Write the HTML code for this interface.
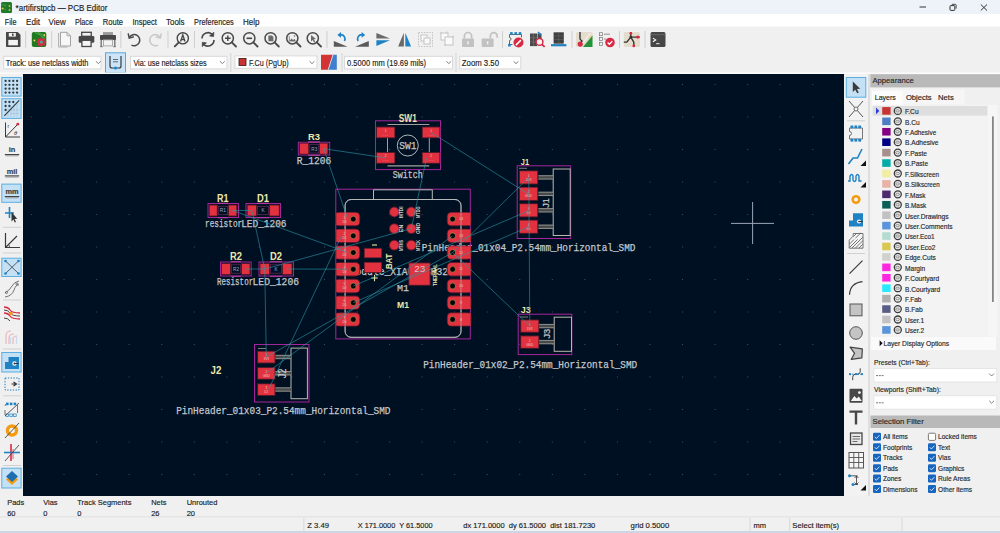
<!DOCTYPE html><html><head><meta charset="utf-8"><title>PCB Editor</title><style>
html,body{margin:0;padding:0;width:1000px;height:533px;overflow:hidden;background:#f0f0f0;}
svg{display:block;font-family:"Liberation Sans", sans-serif;}
</style></head><body>
<svg width="1000" height="533" viewBox="0 0 1000 533">
<rect x="0" y="0" width="1000" height="14" fill="#edf3f8"/>
<rect x="0" y="14" width="1000" height="12.7" fill="#ffffff"/>
<rect x="0" y="26.7" width="1000" height="47.3" fill="#f0f0f0"/>
<rect x="0" y="74" width="23" height="422" fill="#f0f0f0"/>
<rect x="23" y="74" width="821" height="422" fill="#001023"/>
<rect x="844" y="74" width="25" height="422" fill="#f2f2f2"/>
<rect x="868" y="74" width="2" height="422" fill="#dedede"/>
<rect x="870" y="74" width="130" height="422" fill="#f0f0f0"/>
<rect x="0" y="496" width="1000" height="21" fill="#f0f0f0"/>
<rect x="0" y="516.5" width="1000" height="1" fill="#dadada"/>
<rect x="0" y="517.5" width="1000" height="15.5" fill="#f0f0f0"/>
<rect x="0" y="531" width="1000" height="2" fill="#cdd6e6"/>
<rect x="1" y="2" width="11" height="11" rx="1.5" fill="#1f7a2a"/>
<path d="M1 5 q3 -1 5 1 M1 9 q3 -1 5 1" fill="none" stroke="#5fb35f" stroke-width="0.6"/>
<circle cx="2.6" cy="8.4" r="0.9" fill="#e8d24a"/><circle cx="9.5" cy="6" r="0.9" fill="#e8b04a"/><circle cx="9.5" cy="10" r="0.9" fill="#e8b04a"/>
<text x="15.60" y="10.90" font-size="8.7" fill="#1a1a1a" textLength="91.69" lengthAdjust="spacingAndGlyphs" stroke="#1a1a1a" stroke-width="0.15">*artifirstpcb — PCB Editor</text>
<line x1="919.50" y1="7.00" x2="926.00" y2="7.00" stroke="#333" stroke-width="1"/>
<rect x="950" y="5.6" width="4.8" height="4.8" rx="0.8" fill="none" stroke="#333" stroke-width="1"/>
<path d="M951.8 4.3 h3.3 a1 1 0 0 1 1 1 v3.3" fill="none" stroke="#333" stroke-width="0.9"/>
<path d="M980.8 4.5 L987 10.5 M987 4.5 L980.8 10.5" stroke="#333" stroke-width="1"/>
<text x="4.80" y="24.50" font-size="8.55" fill="#1b1b1b" textLength="11.71" lengthAdjust="spacingAndGlyphs" stroke="#1b1b1b" stroke-width="0.15">File</text>
<text x="26.00" y="24.50" font-size="8.55" fill="#1b1b1b" textLength="13.99" lengthAdjust="spacingAndGlyphs" stroke="#1b1b1b" stroke-width="0.15">Edit</text>
<text x="48.60" y="24.50" font-size="8.55" fill="#1b1b1b" textLength="17.10" lengthAdjust="spacingAndGlyphs" stroke="#1b1b1b" stroke-width="0.15">View</text>
<text x="74.90" y="24.50" font-size="8.55" fill="#1b1b1b" textLength="18.11" lengthAdjust="spacingAndGlyphs" stroke="#1b1b1b" stroke-width="0.15">Place</text>
<text x="102.70" y="24.50" font-size="8.55" fill="#1b1b1b" textLength="20.29" lengthAdjust="spacingAndGlyphs" stroke="#1b1b1b" stroke-width="0.15">Route</text>
<text x="132.40" y="24.50" font-size="8.55" fill="#1b1b1b" textLength="24.39" lengthAdjust="spacingAndGlyphs" stroke="#1b1b1b" stroke-width="0.15">Inspect</text>
<text x="166.00" y="24.50" font-size="8.55" fill="#1b1b1b" textLength="18.60" lengthAdjust="spacingAndGlyphs" stroke="#1b1b1b" stroke-width="0.15">Tools</text>
<text x="194.00" y="24.50" font-size="8.55" fill="#1b1b1b" textLength="39.81" lengthAdjust="spacingAndGlyphs" stroke="#1b1b1b" stroke-width="0.15">Preferences</text>
<text x="243.00" y="24.50" font-size="8.55" fill="#1b1b1b" textLength="16.51" lengthAdjust="spacingAndGlyphs" stroke="#1b1b1b" stroke-width="0.15">Help</text>
<g transform="translate(5.50,31.50)"><path d="M0.5 1.2 a0.7 0.7 0 0 1 0.7 -0.7 h11 l2.8 2.8 v11.5 a0.7 0.7 0 0 1 -0.7 0.7 h-13.1 a0.7 0.7 0 0 1 -0.7 -0.7z" fill="#474747"/><rect x="3.3" y="1.5" width="7" height="3.6" fill="#f4f4f4"/><rect x="6.5" y="2" width="1.6" height="2.4" fill="#474747"/><rect x="2.8" y="8.4" width="9.6" height="5.4" fill="#f4f4f4"/></g>
<line x1="25.7" y1="31" x2="25.7" y2="47.8" stroke="#cfcfcf" stroke-width="1"/>
<g transform="translate(31.80,31.50)"><rect x="0" y="0.6" width="14.5" height="14.8" rx="2" fill="#217a22"/><path d="M3 0.8 q6 2 10 7 M6 0.8 q4 1.5 7.5 5" fill="none" stroke="#59b859" stroke-width="0.9"/><circle cx="2.6" cy="9" r="1" fill="#f0d060"/><circle cx="12.5" cy="3.5" r="0.9" fill="#f0d060"/><circle cx="9.5" cy="10.6" r="3.6" fill="#d72b45"/><circle cx="9.5" cy="10.6" r="1.5" fill="#3bb0a0"/><path d="M9.5 5.8 v2 M9.5 13.4 v2 M4.7 10.6 h2 M12.3 10.6 h2 M6.1 7.2 l1.4 1.4 M11.5 12.6 l1.4 1.4 M6.1 14 l1.4 -1.4 M11.5 8.6 l1.4 -1.4" stroke="#d72b45" stroke-width="1.4"/></g>
<line x1="51.7" y1="31" x2="51.7" y2="47.8" stroke="#cfcfcf" stroke-width="1"/>
<g transform="translate(58.00,31.50)"><path d="M2.5 0.8 h6.5 l3.5 3.5 v10.2 h-10z" fill="#f7f7f7" stroke="#9a9a9a" stroke-width="0.9"/><path d="M0.6 1.5 v14 h9" fill="none" stroke="#a8a8a8" stroke-width="0.9"/><path d="M9 0.8 v3.5 h3.5" fill="none" stroke="#9a9a9a" stroke-width="0.8"/></g>
<g transform="translate(78.70,31.50)"><rect x="3" y="0.8" width="9.6" height="4" fill="none" stroke="#474747" stroke-width="1.3"/><rect x="0" y="4.6" width="15.6" height="6.6" rx="1.2" fill="#474747"/><rect x="3.2" y="8.8" width="9.2" height="6.2" fill="#f4f4f4" stroke="#474747" stroke-width="1.3"/></g>
<g transform="translate(100.00,31.50)"><rect x="3" y="0.6" width="10" height="3.2" fill="#9a9a9a"/><rect x="0" y="3.4" width="16" height="5.2" rx="0.8" fill="#474747"/><rect x="3.5" y="8.4" width="9" height="6" fill="#f4f4f4" stroke="#9a9a9a" stroke-width="0.8"/><path d="M1.2 8.6 v6.6 M14.8 8.6 v6.6" stroke="#777" stroke-width="1.4"/><path d="M0 15.2 h3 M13 15.2 h3" stroke="#777" stroke-width="0.9"/></g>
<line x1="120.8" y1="31" x2="120.8" y2="47.8" stroke="#cfcfcf" stroke-width="1"/>
<g transform="translate(127.00,31.50)"><path d="M2.5 5.6 A5.6 5.6 0 1 1 4.5 13.6" fill="none" stroke="#474747" stroke-width="1.5"/><path d="M1.2 1.8 L2.2 6.6 L6.8 5.2" fill="none" stroke="#474747" stroke-width="1.5"/></g>
<g transform="translate(149.50,31.50)"><path d="M10.5 5.6 A5.6 5.6 0 1 0 8.5 13.6" fill="none" stroke="#c8c8c8" stroke-width="1.5"/><path d="M11.8 1.8 L10.8 6.6 L6.2 5.2" fill="none" stroke="#c8c8c8" stroke-width="1.5"/></g>
<line x1="168" y1="31" x2="168" y2="47.8" stroke="#cfcfcf" stroke-width="1"/>
<g transform="translate(174.00,31.50)"><circle cx="8.8" cy="6.8" r="5.6" fill="none" stroke="#474747" stroke-width="1.4"/><path d="M4.8 10.8 L0.8 14.8" stroke="#474747" stroke-width="1.9" stroke-linecap="round"/><path d="M6.6 10 L8.8 3.4 L11 10 M7.4 8 h2.8" fill="none" stroke="#474747" stroke-width="1.3"/></g>
<line x1="194.5" y1="31" x2="194.5" y2="47.8" stroke="#cfcfcf" stroke-width="1"/>
<g transform="translate(200.00,31.50)"><path d="M2 7 A6 6 0 0 1 12.6 3.4" fill="none" stroke="#474747" stroke-width="1.6"/><path d="M14 8.6 A6 6 0 0 1 3.4 12.4" fill="none" stroke="#474747" stroke-width="1.6"/><path d="M13.8 0.8 L13.6 5 L9.6 4.4 z" fill="#474747" stroke="#474747" stroke-width="0.8"/><path d="M2.2 15 L2.4 10.8 L6.4 11.4 z" fill="#474747" stroke="#474747" stroke-width="0.8"/></g>
<g transform="translate(221.00,31.50)"><circle cx="6.8" cy="6.8" r="5.6" fill="none" stroke="#4a4a4a" stroke-width="1.5"/><path d="M10.8 10.8 L15 15" stroke="#4a4a4a" stroke-width="1.9" stroke-linecap="round"/><path d="M4 6.8 h5.6 M6.8 4 v5.6" stroke="#474747" stroke-width="1.5"/></g>
<g transform="translate(242.50,31.50)"><circle cx="6.8" cy="6.8" r="5.6" fill="none" stroke="#4a4a4a" stroke-width="1.5"/><path d="M10.8 10.8 L15 15" stroke="#4a4a4a" stroke-width="1.9" stroke-linecap="round"/><path d="M4 6.8 h5.6" stroke="#474747" stroke-width="1.6"/></g>
<g transform="translate(263.80,31.50)"><circle cx="6.8" cy="6.8" r="5.6" fill="none" stroke="#4a4a4a" stroke-width="1.5"/><path d="M10.8 10.8 L15 15" stroke="#4a4a4a" stroke-width="1.9" stroke-linecap="round"/><path d="M4.6 4 h3.6 l1.4 1.4 v4.4 h-5z" fill="#6a6a6a"/></g>
<g transform="translate(285.50,31.50)"><circle cx="6.8" cy="6.8" r="5.6" fill="none" stroke="#4a4a4a" stroke-width="1.5"/><path d="M10.8 10.8 L15 15" stroke="#4a4a4a" stroke-width="1.9" stroke-linecap="round"/><path d="M4 9.5 l2 -2.6 l1.5 1.6 l1.5 -1.2 l1 2.2z" fill="#6a6a6a"/><path d="M3.8 4.6 v5 h6.2" fill="none" stroke="#6a6a6a" stroke-width="0.7"/><circle cx="9" cy="4.5" r="0.8" fill="#6a6a6a"/></g>
<g transform="translate(306.00,31.50)"><circle cx="6.8" cy="6.8" r="5.6" fill="none" stroke="#4a4a4a" stroke-width="1.5"/><path d="M10.8 10.8 L15 15" stroke="#4a4a4a" stroke-width="1.9" stroke-linecap="round"/><path d="M5 3.4 L5 10 L6.6 8.4 L8.2 11 L9.3 10.3 L7.8 7.8 L10 7.6z" fill="#6a6a6a"/></g>
<line x1="327" y1="31" x2="327" y2="47.8" stroke="#cfcfcf" stroke-width="1"/>
<g transform="translate(333.80,31.50)"><path d="M0 15.2 L13.8 15.2 L0 9.6z" fill="#5a5a5a"/><path d="M10.6 9.5 A4.2 4.2 0 0 0 6.4 3.2" fill="none" stroke="#1f82c4" stroke-width="1.6"/><path d="M3.6 3.4 L7.2 0.6 L7.2 6.2z" fill="#1f82c4"/></g>
<g transform="translate(355.00,31.50)"><path d="M0 15.2 L13.8 15.2 L13.8 9.6z" fill="#5a5a5a"/><path d="M3.2 9.5 A4.2 4.2 0 0 1 7.4 3.2" fill="none" stroke="#1f82c4" stroke-width="1.6"/><path d="M10.2 3.4 L6.6 0.6 L6.6 6.2z" fill="#1f82c4"/></g>
<g transform="translate(375.80,31.50)"><path d="M0.6 1.6 L14.2 7 L0.6 7z" fill="#6a6a6a"/><path d="M0.6 8.8 L14.2 8.8 L0.6 14.4z" fill="#1f82c4"/></g>
<g transform="translate(397.50,31.50)"><path d="M6.4 1.2 L6.4 15 L0.6 15z" fill="#6a6a6a"/><path d="M7.8 1.2 L13.6 15 L7.8 15z" fill="#1f82c4"/></g>
<g transform="translate(417.50,31.50)"><rect x="1" y="1" width="14" height="14" fill="none" stroke="#c4c4c4" stroke-width="1" stroke-dasharray="1.5 1.2"/><rect x="3.5" y="3.5" width="6" height="6" fill="#fafafa" stroke="#c4c4c4" stroke-width="1"/><rect x="6.5" y="6.5" width="6" height="6" fill="#fafafa" stroke="#c4c4c4" stroke-width="1"/></g>
<g transform="translate(440.00,31.50)"><rect x="1" y="1.5" width="7" height="7" fill="#fafafa" stroke="#c4c4c4" stroke-width="1"/><rect x="5" y="5.5" width="8" height="8" fill="#fafafa" stroke="#c4c4c4" stroke-width="1"/><path d="M0 1.5 h2 M7 0 v2 M12 5 h2 M4 13.5 h2" stroke="#c4c4c4" stroke-width="1"/></g>
<g transform="translate(461.00,31.50)"><path d="M3.4 7 V4.6 A3.6 3.6 0 0 1 10.6 4.6 V7" fill="none" stroke="#c2c2c2" stroke-width="1.7"/><rect x="1" y="7" width="12" height="8.6" rx="1" fill="#c2c2c2"/><rect x="6.3" y="9.8" width="1.5" height="3" fill="#f2f2f2"/></g>
<g transform="translate(481.00,31.50)"><path d="M9.4 7 V4.6 A3.4 3.4 0 0 1 16.2 4.6 V6.2" fill="none" stroke="#c2c2c2" stroke-width="1.7"/><rect x="0.6" y="7" width="12" height="8.6" rx="1" fill="#c2c2c2"/><rect x="5.9" y="9.8" width="1.5" height="3" fill="#f2f2f2"/></g>
<line x1="502.5" y1="31" x2="502.5" y2="47.8" stroke="#cfcfcf" stroke-width="1"/>
<g transform="translate(507.50,31.50)"><path d="M2 3 v3 a1.4 1.4 0 0 1 0 3 v4 h3 M2 3 h12 v3" fill="none" stroke="#555" stroke-width="0.9"/><rect x="2.6" y="0.6" width="2.6" height="2.6" fill="#1f82c4"/><rect x="6.9" y="0.6" width="2.6" height="2.6" fill="#1f82c4"/><rect x="11.2" y="0.6" width="2.6" height="2.6" fill="#1f82c4"/><rect x="0.6" y="12.4" width="2.6" height="2.6" fill="#1f82c4"/><circle cx="11" cy="11" r="5" fill="#d72b45"/><path d="M8.4 13.6 L13.4 8.6" stroke="#fff" stroke-width="1.5"/></g>
<g transform="translate(529.50,31.50)"><rect x="0.5" y="2" width="7" height="12.6" fill="#4a4a4a"/><path d="M4 2 v12.6 M0.5 6.2 h7 M0.5 10.4 h7" stroke="#777" stroke-width="0.6"/><rect x="8" y="2" width="4" height="6" fill="#4a4a4a"/><path d="M8.5 0.5 l3 3" stroke="#1f82c4" stroke-width="1.6"/><circle cx="10" cy="10.4" r="3.4" fill="#f4f4f4" stroke="#d72b45" stroke-width="1.5"/><path d="M12.4 12.8 L15.2 15.4" stroke="#d72b45" stroke-width="1.8"/></g>
<g transform="translate(551.00,31.50)"><rect x="2.6" y="0.8" width="10.2" height="11" fill="#3f3f3f"/><path d="M2.6 4.4 h10.2 M2.6 8 h10.2 M7.7 0.8 v11" stroke="#6a6a6a" stroke-width="0.5"/><rect x="0" y="12.6" width="15.4" height="2.2" fill="#1f82c4"/><rect x="3" y="11.4" width="9.4" height="1.2" fill="#777"/></g>
<line x1="572" y1="31" x2="572" y2="47.8" stroke="#cfcfcf" stroke-width="1"/>
<g transform="translate(576.00,31.50)"><rect x="0" y="0.6" width="16.5" height="15" rx="1.5" fill="#e4dccd"/><path d="M7 15.6 L16.5 4 V15.6z" fill="#24923a"/><path d="M4 0.6 v7 l2 2 l-1.4 2" fill="none" stroke="#2a2a2a" stroke-width="1.3"/><path d="M14.5 1.5 L6.5 12" stroke="#f4f4f4" stroke-width="1.2"/><circle cx="4.2" cy="12.6" r="2.6" fill="#d72b45"/><circle cx="13.8" cy="5.6" r="1" fill="#f0d060"/></g>
<g transform="translate(598.80,31.50)"><rect x="0.8" y="1.2" width="3" height="3" fill="none" stroke="#777" stroke-width="0.7"/><rect x="0.8" y="6" width="3" height="3" fill="none" stroke="#777" stroke-width="0.7"/><rect x="0.8" y="10.8" width="3" height="3" fill="none" stroke="#777" stroke-width="0.7"/><path d="M5.2 2.7 h6 M5.2 7.5 h2" stroke="#777" stroke-width="0.8"/><circle cx="11.2" cy="11" r="4.8" fill="#d72b45"/><path d="M8.8 11 l1.8 1.8 l3 -3.2" fill="none" stroke="#fff" stroke-width="1.3"/></g>
<line x1="619.5" y1="31" x2="619.5" y2="47.8" stroke="#cfcfcf" stroke-width="1"/>
<g transform="translate(623.80,31.50)"><rect x="0" y="0.6" width="16.2" height="15" rx="1.5" fill="#e4dccd"/><path d="M7 0.6 v5 l-4 5 h-3 M7 5.6 l3 5 v5 M7 5.6 h9" fill="none" stroke="#333" stroke-width="1.4"/><circle cx="7" cy="1.8" r="1.4" fill="#d72b45"/><circle cx="14" cy="5.6" r="1.6" fill="#d72b45"/><circle cx="10" cy="14.4" r="1.4" fill="#d72b45"/><circle cx="7" cy="5.6" r="1.4" fill="#333"/></g>
<line x1="645" y1="31" x2="645" y2="47.8" stroke="#cfcfcf" stroke-width="1"/>
<g transform="translate(650.50,31.50)"><rect x="0" y="0.6" width="15" height="15" rx="1.6" fill="#474747"/><path d="M0 3.2 h15" stroke="#888" stroke-width="0.5"/><path d="M2.4 6.6 L5.2 8.4 L2.4 10.2" fill="none" stroke="#fff" stroke-width="1.1"/><path d="M5.6 12.2 h3.4" stroke="#fff" stroke-width="0.9"/></g>
<rect x="3.7" y="56.3" width="97.3" height="12.600000000000009" fill="#ffffff" stroke="#d9d9d9" stroke-width="1"/>
<text x="5.70" y="65.80" font-size="8.55" fill="#1b1b1b" textLength="82.70" lengthAdjust="spacingAndGlyphs" stroke="#1b1b1b" stroke-width="0.15">Track: use netclass width</text>
<path d="M95.89999999999999 61.3 L98.3 63.6 L100.7 61.3" fill="none" stroke="#606060" stroke-width="0.8"/>
<rect x="105.5" y="52.8" width="20" height="20" fill="#cce4f7" stroke="#5aa7dc" stroke-width="1"/>
<path d="M110 56 v10 a2 2 0 0 0 2 2 h7 a2 2 0 0 0 2 -2 v-10" fill="none" stroke="#3a3a3a" stroke-width="1.2"/>
<path d="M113 59.5 h5 M113 61.8 h5" stroke="#4a4a4a" stroke-width="0.8"/>
<circle cx="115.5" cy="68" r="1.6" fill="#1e88c8"/>
<rect x="130.5" y="56.3" width="96.5" height="12.600000000000009" fill="#ffffff" stroke="#d9d9d9" stroke-width="1"/>
<text x="133.40" y="65.80" font-size="8.55" fill="#1b1b1b" textLength="73.28" lengthAdjust="spacingAndGlyphs" stroke="#1b1b1b" stroke-width="0.15">Via: use netclass sizes</text>
<path d="M219.9 61.3 L222.3 63.6 L224.70000000000002 61.3" fill="none" stroke="#606060" stroke-width="0.8"/>
<line x1="230.80" y1="53.00" x2="230.80" y2="72.00" stroke="#d4d4d4" stroke-width="1"/>
<rect x="234.9" y="55.9" width="81.99999999999997" height="12.399999999999999" fill="#ffffff" stroke="#d9d9d9" stroke-width="1"/>
<text x="249.00" y="65.80" font-size="8.55" fill="#1b1b1b" textLength="39.61" lengthAdjust="spacingAndGlyphs" stroke="#1b1b1b" stroke-width="0.15">F.Cu (PgUp)</text>
<path d="M309.6 61.3 L312 63.6 L314.4 61.3" fill="none" stroke="#606060" stroke-width="0.8"/>
<rect x="239" y="58.5" width="7" height="7" fill="#c83434" stroke="#3a1010" stroke-width="0.8"/>
<path d="M321 54.8 h12 l-5 15 h-7 z" fill="#d33535"/><path d="M333 54.8 h3.8 v15 h-8.8 z" fill="#3f7fcf"/>
<line x1="328.20" y1="69.80" x2="333.00" y2="54.80" stroke="#e8e8e8" stroke-width="0.8"/>
<line x1="342.00" y1="53.00" x2="342.00" y2="72.00" stroke="#d4d4d4" stroke-width="1"/>
<rect x="344.5" y="56.3" width="108" height="12.600000000000009" fill="#ffffff" stroke="#d9d9d9" stroke-width="1"/>
<text x="347.10" y="65.80" font-size="8.55" fill="#1b1b1b" textLength="78.99" lengthAdjust="spacingAndGlyphs" stroke="#1b1b1b" stroke-width="0.15">0.5000 mm (19.69 mils)</text>
<path d="M446.40000000000003 61.3 L448.8 63.6 L451.2 61.3" fill="none" stroke="#606060" stroke-width="0.8"/>
<line x1="456.00" y1="53.00" x2="456.00" y2="72.00" stroke="#d4d4d4" stroke-width="1"/>
<rect x="459.8" y="56.3" width="60.99999999999994" height="12.600000000000009" fill="#ffffff" stroke="#d9d9d9" stroke-width="1"/>
<text x="461.80" y="65.80" font-size="8.55" fill="#1b1b1b" textLength="37.20" lengthAdjust="spacingAndGlyphs" stroke="#1b1b1b" stroke-width="0.15">Zoom 3.50</text>
<path d="M513.6 61.3 L516 63.6 L518.4 61.3" fill="none" stroke="#606060" stroke-width="0.8"/>
<rect x="0.00" y="72.50" width="1000.00" height="1.50" fill="#fbfbfb"/>
<rect x="1.80" y="77.50" width="19.30" height="18.60" fill="#c4e0f5" stroke="#5aaee0" stroke-width="1"/>
<circle cx="5.60" cy="80.90" r="1.15" fill="#2f3a40"/><circle cx="5.60" cy="84.80" r="1.15" fill="#2f3a40"/><circle cx="5.60" cy="88.70" r="1.15" fill="#2f3a40"/><circle cx="5.60" cy="92.60" r="1.15" fill="#2f3a40"/><circle cx="9.43" cy="80.90" r="1.15" fill="#2f3a40"/><circle cx="9.43" cy="84.80" r="1.15" fill="#2f3a40"/><circle cx="9.43" cy="88.70" r="1.15" fill="#2f3a40"/><circle cx="9.43" cy="92.60" r="1.15" fill="#2f3a40"/><circle cx="13.26" cy="80.90" r="1.15" fill="#2f3a40"/><circle cx="13.26" cy="84.80" r="1.15" fill="#2f3a40"/><circle cx="13.26" cy="88.70" r="1.15" fill="#2f3a40"/><circle cx="13.26" cy="92.60" r="1.15" fill="#2f3a40"/><circle cx="17.09" cy="80.90" r="1.15" fill="#2f3a40"/><circle cx="17.09" cy="84.80" r="1.15" fill="#2f3a40"/><circle cx="17.09" cy="88.70" r="1.15" fill="#2f3a40"/><circle cx="17.09" cy="92.60" r="1.15" fill="#2f3a40"/>
<rect x="1.80" y="98.70" width="19.30" height="19.70" fill="#c4e0f5" stroke="#5aaee0" stroke-width="1"/>
<path d="M8 117 V108 M11 117 V106 M14 117 V104 M17 117 V102 M19.5 110 H8 M19.5 113.5 H10" stroke="#9ab8cc" stroke-width="0.5"/>
<circle cx="5.60" cy="102.00" r="1.15" fill="#2f3a40"/><circle cx="5.60" cy="106.00" r="1.15" fill="#2f3a40"/><circle cx="5.60" cy="110.00" r="1.15" fill="#2f3a40"/><circle cx="9.43" cy="102.00" r="1.15" fill="#2f3a40"/><circle cx="9.43" cy="106.00" r="1.15" fill="#2f3a40"/><circle cx="13.26" cy="102.00" r="1.15" fill="#2f3a40"/><path d="M4.3 115.8 L19.2 100.4" stroke="#2f3a40" stroke-width="1.1"/>
<path d="M5.5 122.5 v14.5 h14.5 M5.5 137 L17 125" fill="none" stroke="#3b3b3b" stroke-width="1"/><circle cx="17.8" cy="124.2" r="1.4" fill="#d72b45"/><text x="7.5" y="128" font-size="5" fill="#333">r</text><text x="14" y="135" font-size="5.5" fill="#333" font-style="italic">θ</text>
<text x="12" y="152.2" font-size="7.4" font-weight="bold" fill="#3a3a3a" text-anchor="middle" stroke="#3a3a3a" stroke-width="0.15">in</text><path d="M4.8 154.6 h14.4" stroke="#3a3a3a" stroke-width="1.1"/><path d="M5.5 155.9 h13" stroke="#777" stroke-width="0.6"/>
<text x="12" y="173.6" font-size="7.4" font-weight="bold" fill="#3a3a3a" text-anchor="middle" stroke="#3a3a3a" stroke-width="0.15">mil</text><path d="M4.8 175.9 h14.4" stroke="#3a3a3a" stroke-width="1.1"/><path d="M5.5 177.20000000000002 h13" stroke="#777" stroke-width="0.6"/>
<rect x="1.80" y="184.10" width="19.30" height="18.20" fill="#c4e0f5" stroke="#5aaee0" stroke-width="1"/>
<text x="12" y="194.2" font-size="7.4" font-weight="bold" fill="#3a3a3a" text-anchor="middle" stroke="#3a3a3a" stroke-width="0.15">mm</text><path d="M4.8 196.6 h14.4" stroke="#3a3a3a" stroke-width="1.1"/><path d="M5.5 197.9 h13" stroke="#777" stroke-width="0.6"/>
<path d="M5 213 h9 M9.5 207 v11" stroke="#1f82c4" stroke-width="1.6"/><path d="M11.5 212 L11.5 221.5 L13.4 219.6 L14.8 222.6 L16 222 L14.6 219 L17.2 218.8z" fill="#333"/>
<line x1="3" y1="227.3" x2="21" y2="227.3" stroke="#d0d0d0" stroke-width="1"/>
<path d="M5.5 233 v14.5 h14.5 M5.5 247.5 L17 236" fill="none" stroke="#3b3b3b" stroke-width="1.2"/><path d="M9.5 247.5 A5 5 0 0 0 8.4 244.2" fill="none" stroke="#3b3b3b" stroke-width="0.8"/>
<line x1="3" y1="253" x2="21" y2="253" stroke="#d0d0d0" stroke-width="1"/>
<rect x="1.80" y="258.20" width="19.30" height="18.30" fill="#c4e0f5" stroke="#5aaee0" stroke-width="1"/>
<path d="M5.5 261 L18.5 273.5 M18.5 261 L5.5 273.5" stroke="#3b3b3b" stroke-width="0.8"/><circle cx="5.5" cy="261" r="1.3" fill="#1f82c4"/><circle cx="18.5" cy="273.5" r="1.3" fill="#1f82c4"/><circle cx="18.5" cy="261" r="1.3" fill="#1f82c4"/><circle cx="5.5" cy="273.5" r="1.3" fill="#1f82c4"/>
<path d="M5 293 Q10 290 12 286 T19 281 M5 297 Q12 296 14 290 T19 285" fill="none" stroke="#555" stroke-width="0.8"/><circle cx="6.5" cy="292.5" r="1.1" fill="none" stroke="#555" stroke-width="0.7"/><circle cx="17" cy="284" r="1.1" fill="none" stroke="#555" stroke-width="0.7"/>
<line x1="3" y1="300" x2="21" y2="300" stroke="#d0d0d0" stroke-width="1"/>
<path d="M4 307 q4 0 6 3 t10 3 M4 313 q4 0 6 3 t10 3" fill="none" stroke="#d72b45" stroke-width="1.3"/><path d="M4 310 q4 0 6 3 t10 3 M4 318 q4 0 6 3" fill="none" stroke="#444" stroke-width="1"/><circle cx="11" cy="313.5" r="1.8" fill="#f39c12"/>
<path d="M6 344 v-8 q0 -5 5 -5 M9 344 v-6 q0 -4 5 -4 M13 344 v-5 q0 -3 4 -3" fill="none" stroke="#e9b8bd" stroke-width="1.2"/><path d="M10.5 344 v-7 M16.5 344 v-7" stroke="#c6dced" stroke-width="1.2"/>
<line x1="3" y1="349" x2="21" y2="349" stroke="#d0d0d0" stroke-width="1"/>
<rect x="1.80" y="352.50" width="19.30" height="19.50" fill="#c4e0f5" stroke="#5aaee0" stroke-width="1"/>
<path d="M5 369 v-7 h3.5 v-5 h10.5 v12z" fill="#1f82c4"/><circle cx="14.5" cy="363.5" r="2.2" fill="#f4f4f4"/><path d="M14.5 363.5 h4" stroke="#333" stroke-width="1"/><circle cx="14.5" cy="363.5" r="0.9" fill="#333"/>
<rect x="5" y="378" width="14" height="12" fill="none" stroke="#1f82c4" stroke-width="1" stroke-dasharray="1.4 1.4"/><path d="M11.5 384 h5 M13.5 382 l3 2 l-3 2" stroke="#333" stroke-width="1.2" fill="none"/>
<line x1="3" y1="395.8" x2="21" y2="395.8" stroke="#d0d0d0" stroke-width="1"/>
<path d="M5 406 q0 -2 2 -2 M17.5 405 v8 M5 410 v5" fill="none" stroke="#555" stroke-width="0.8"/><rect x="6.0" y="402.6" width="2.6" height="2.6" fill="#1f82c4"/><rect x="9.8" y="402.6" width="2.6" height="2.6" fill="#1f82c4"/><rect x="13.6" y="402.6" width="2.6" height="2.6" fill="#1f82c4"/><rect x="6.0" y="414" width="2.6" height="2.6" fill="none" stroke="#1f82c4" stroke-width="0.7"/><rect x="9.8" y="414" width="2.6" height="2.6" fill="none" stroke="#1f82c4" stroke-width="0.7"/><rect x="13.6" y="414" width="2.6" height="2.6" fill="none" stroke="#1f82c4" stroke-width="0.7"/><path d="M5 416 L19 403" stroke="#444" stroke-width="0.9"/>
<circle cx="12" cy="430.5" r="6.2" fill="#f39c12"/><circle cx="12" cy="430.5" r="2.8" fill="#f4f4f4"/><path d="M5 438 L19 423" stroke="#444" stroke-width="0.9"/>
<path d="M11 444 v17" stroke="#d72b45" stroke-width="1.6"/><path d="M4 452.5 h16" stroke="#1f82c4" stroke-width="1.6"/><path d="M13 449 v10" stroke="#d72b45" stroke-width="1" opacity="0.7"/><path d="M5 461 L19 445" stroke="#444" stroke-width="0.9"/>
<line x1="3" y1="465.5" x2="21" y2="465.5" stroke="#d0d0d0" stroke-width="1"/>
<rect x="1.80" y="468.20" width="19.30" height="19.80" fill="#c4e0f5" stroke="#5aaee0" stroke-width="1"/>
<path d="M12 474 l6 5.5 l-6 5.5 l-6 -5.5z" fill="#f39c12"/><path d="M12 471 l6 5.5 l-6 5.5 l-6 -5.5z" fill="#1f6fb0"/>
<rect x="846.30" y="77.50" width="19.50" height="19.70" fill="#c4e0f5" stroke="#5aaee0" stroke-width="1"/>
<path d="M852.8 81.5 L852.8 92 L855.2 89.7 L857.2 93.3 L858.8 92.5 L856.9 89 L860.2 88.8z" fill="#3b3b3b"/>
<path d="M849 101 L863 117 M863 101 L849 117" stroke="#555" stroke-width="1"/><circle cx="856" cy="109" r="2" fill="#f4f4f4" stroke="#555" stroke-width="0.8"/>
<line x1="847" y1="120.8" x2="865" y2="120.8" stroke="#d0d0d0" stroke-width="1"/>
<path d="M849.5 128 h13 v11 h-13 v-3.5 a2 2 0 0 0 0 -4z" fill="none" stroke="#555" stroke-width="0.8"/><rect x="850.5" y="125.5" width="2.8" height="2.8" fill="#1f82c4"/><rect x="850.5" y="138.8" width="2.8" height="2.8" fill="#1f82c4"/><rect x="854.4" y="125.5" width="2.8" height="2.8" fill="#1f82c4"/><rect x="854.4" y="138.8" width="2.8" height="2.8" fill="#1f82c4"/><rect x="858.3" y="125.5" width="2.8" height="2.8" fill="#1f82c4"/><rect x="858.3" y="138.8" width="2.8" height="2.8" fill="#1f82c4"/>
<path d="M848.5 164 L853 158 h4.5 L862 149" fill="none" stroke="#1f82c4" stroke-width="1.6"/><path d="M866 160.5 v5.5 h-5.5z" fill="#111"/>
<path d="M848 181 h2 v-5 q2 -3 3 0 v4 q1.5 3 3 0 v-4 q1.5 -3 3 0 v5 h2.5" fill="none" stroke="#1f82c4" stroke-width="1.4"/><path d="M866 182 v5.5 h-5.5z" fill="#111"/>
<circle cx="856" cy="199.6" r="4.6" fill="#f39c12"/><circle cx="856" cy="199.6" r="2" fill="#f4f4f4"/>
<path d="M849 226.4 v-6 h4 v-7.2 h10 v13.2z" fill="#1f82c4"/><circle cx="859" cy="221.5" r="2.1" fill="#f4f4f4"/><path d="M859 221.5 h4" stroke="#333" stroke-width="1"/><circle cx="859" cy="221.5" r="0.8" fill="#333"/>
<path d="M849.2 248.2 v-8 l4 -4 v-2.7 h9.8 v14.7z" fill="#f4f4f4" stroke="#555" stroke-width="0.8"/><path d="M849.5 244 l4.5 -4.5 M849.5 247.5 l8 -8 M852 248 l10.8 -10.8 M855.5 248 l7.3 -7.3 M859 248 l3.8 -3.8 M853.5 236.5 l3 -3 M855.5 238 l5.3 -5" stroke="#555" stroke-width="0.8"/>
<line x1="847" y1="253.5" x2="865" y2="253.5" stroke="#d0d0d0" stroke-width="1"/>
<path d="M849.5 273.7 L862.5 260.6" stroke="#3b3b3b" stroke-width="1.2"/>
<path d="M849.5 294.8 Q850 283 862.5 281.6" fill="none" stroke="#3b3b3b" stroke-width="1.2"/>
<rect x="850" y="304" width="12" height="11.8" fill="#c4c4c4" stroke="#555" stroke-width="1"/>
<circle cx="856" cy="333" r="6.3" fill="#c4c4c4" stroke="#555" stroke-width="1"/>
<path d="M850.1 347.2 L862.3 348.9 L861.9 357.8 L851.3 359.3 L854.6 353.3z" fill="#c4c4c4" stroke="#444" stroke-width="1.2" stroke-linejoin="round"/>
<path d="M849 374.2 h14" stroke="#1f82c4" stroke-width="1" stroke-dasharray="1.6 1.2"/><path d="M860.2 368.3 v3.5 q0 2.4 -3 2.4 h-1.5 q-3 0 -3 3 v3" fill="none" stroke="#444" stroke-width="1"/><circle cx="850" cy="374.2" r="1.1" fill="#1f82c4"/><circle cx="856" cy="374.2" r="1.1" fill="#1f82c4"/><circle cx="862" cy="374.2" r="1.1" fill="#1f82c4"/>
<rect x="849.5" y="388.7" width="13" height="14" rx="1" fill="#474747"/><path d="M850.8 401 l3.5 -5 l2.5 2.5 l2 -2 l3 4.5z" fill="#f4f4f4"/><circle cx="859.4" cy="392.6" r="1.4" fill="#f4f4f4"/>
<path d="M849.5 411.6 h13 M856 411.6 v13" stroke="#474747" stroke-width="2.4"/>
<rect x="850.5" y="433" width="11.5" height="11.5" fill="#e8e8e8" stroke="#474747" stroke-width="1.3"/><path d="M852.5 436.5 h7.5 M852.5 439 h7.5 M852.5 441.5 h5" stroke="#474747" stroke-width="0.8"/>
<rect x="849" y="452.5" width="14.5" height="15.5" fill="#f6f6f6" stroke="#555" stroke-width="1"/><path d="M849 457.5 h14.5 M849 462.5 h14.5 M853.8 452.5 v15.5 M858.7 452.5 v15.5" stroke="#555" stroke-width="0.9"/>
<path d="M849.5 475.8 h8 M856.5 476 v8.5 M854.5 478 l2 -2 l2 2 M854.5 482.5 l2 2 l2 -2 M853 484.5 h5" fill="none" stroke="#333" stroke-width="0.8"/><circle cx="849.5" cy="475.8" r="1.5" fill="#1f82c4"/><circle cx="853" cy="484.6" r="1.5" fill="#1f82c4"/><path d="M866 485 v5.5 h-5.5z" fill="#111"/>
<rect x="870.30" y="74.20" width="129.70" height="13.20" fill="#b9b9b9"/>
<text x="872.50" y="83.30" font-size="8.12" fill="#262626" textLength="41.29" lengthAdjust="spacingAndGlyphs" stroke="#262626" stroke-width="0.15">Appearance</text>
<rect x="871.50" y="89.50" width="93.00" height="15.00" fill="#f6f6f6"/>
<rect x="872.00" y="91.00" width="30.50" height="14.00" fill="#fcfcfc"/>
<text x="874.75" y="100.10" font-size="7.54" fill="#1b1b1b" textLength="21.01" lengthAdjust="spacingAndGlyphs" stroke="#1b1b1b" stroke-width="0.15">Layers</text>
<text x="905.90" y="100.10" font-size="7.54" fill="#1b1b1b" textLength="25.80" lengthAdjust="spacingAndGlyphs" stroke="#1b1b1b" stroke-width="0.15">Objects</text>
<text x="938.00" y="100.10" font-size="7.54" fill="#1b1b1b" textLength="15.81" lengthAdjust="spacingAndGlyphs" stroke="#1b1b1b" stroke-width="0.15">Nets</text>
<rect x="871.50" y="104.80" width="118.00" height="231.00" fill="#f3f3f3"/>
<rect x="872.70" y="106.00" width="114.60" height="9.60" fill="#dedede"/>
<path d="M876 107.6 L879.3 110.9 L876 114.2 Z" fill="#2c3fd6"/>
<rect x="988.00" y="104.80" width="9.50" height="232.00" fill="#f6f6f6"/>
<rect x="992.00" y="116.40" width="1.80" height="185.60" fill="#858585"/>
<rect x="882.20" y="107.10" width="8.40" height="7.60" fill="#c83434"/>
<circle cx="897.8" cy="110.90" r="3.5" fill="#e6e6e6" stroke="#3c3c3c" stroke-width="1.3"/>
<ellipse cx="897.6" cy="110.90" rx="1.9" ry="1.1" fill="none" stroke="#666" stroke-width="0.6"/>
<text x="905.00" y="114.20" font-size="7.25" fill="#262626" textLength="13.56" lengthAdjust="spacingAndGlyphs" stroke="#262626" stroke-width="0.15">F.Cu</text>
<rect x="882.20" y="117.53" width="8.40" height="7.60" fill="#4d7fc4"/>
<circle cx="897.8" cy="121.33" r="3.5" fill="#e6e6e6" stroke="#3c3c3c" stroke-width="1.3"/>
<ellipse cx="897.6" cy="121.33" rx="1.9" ry="1.1" fill="none" stroke="#666" stroke-width="0.6"/>
<text x="905.00" y="124.63" font-size="7.25" fill="#262626" textLength="14.66" lengthAdjust="spacingAndGlyphs" stroke="#262626" stroke-width="0.15">B.Cu</text>
<rect x="882.20" y="127.96" width="8.40" height="7.60" fill="#840084"/>
<circle cx="897.8" cy="131.76" r="3.5" fill="#e6e6e6" stroke="#3c3c3c" stroke-width="1.3"/>
<ellipse cx="897.6" cy="131.76" rx="1.9" ry="1.1" fill="none" stroke="#666" stroke-width="0.6"/>
<text x="905.00" y="135.06" font-size="7.25" fill="#262626" textLength="31.21" lengthAdjust="spacingAndGlyphs" stroke="#262626" stroke-width="0.15">F.Adhesive</text>
<rect x="882.20" y="138.39" width="8.40" height="7.60" fill="#000084"/>
<circle cx="897.8" cy="142.19" r="3.5" fill="#e6e6e6" stroke="#3c3c3c" stroke-width="1.3"/>
<ellipse cx="897.6" cy="142.19" rx="1.9" ry="1.1" fill="none" stroke="#666" stroke-width="0.6"/>
<text x="905.00" y="145.49" font-size="7.25" fill="#262626" textLength="33.36" lengthAdjust="spacingAndGlyphs" stroke="#262626" stroke-width="0.15">B.Adhesive</text>
<rect x="882.20" y="148.82" width="8.40" height="7.60" fill="#a6908b"/>
<circle cx="897.8" cy="152.62" r="3.5" fill="#e6e6e6" stroke="#3c3c3c" stroke-width="1.3"/>
<ellipse cx="897.6" cy="152.62" rx="1.9" ry="1.1" fill="none" stroke="#666" stroke-width="0.6"/>
<text x="905.00" y="155.92" font-size="7.25" fill="#262626" textLength="21.99" lengthAdjust="spacingAndGlyphs" stroke="#262626" stroke-width="0.15">F.Paste</text>
<rect x="882.20" y="159.25" width="8.40" height="7.60" fill="#00ada6"/>
<circle cx="897.8" cy="163.05" r="3.5" fill="#e6e6e6" stroke="#3c3c3c" stroke-width="1.3"/>
<ellipse cx="897.6" cy="163.05" rx="1.9" ry="1.1" fill="none" stroke="#666" stroke-width="0.6"/>
<text x="905.00" y="166.35" font-size="7.25" fill="#262626" textLength="23.09" lengthAdjust="spacingAndGlyphs" stroke="#262626" stroke-width="0.15">B.Paste</text>
<rect x="882.20" y="169.68" width="8.40" height="7.60" fill="#f2eda1"/>
<circle cx="897.8" cy="173.48" r="3.5" fill="#e6e6e6" stroke="#3c3c3c" stroke-width="1.3"/>
<ellipse cx="897.6" cy="173.48" rx="1.9" ry="1.1" fill="none" stroke="#666" stroke-width="0.6"/>
<text x="905.00" y="176.78" font-size="7.25" fill="#262626" textLength="34.10" lengthAdjust="spacingAndGlyphs" stroke="#262626" stroke-width="0.15">F.Silkscreen</text>
<rect x="882.20" y="180.11" width="8.40" height="7.60" fill="#e8b2a7"/>
<circle cx="897.8" cy="183.91" r="3.5" fill="#e6e6e6" stroke="#3c3c3c" stroke-width="1.3"/>
<ellipse cx="897.6" cy="183.91" rx="1.9" ry="1.1" fill="none" stroke="#666" stroke-width="0.6"/>
<text x="905.00" y="187.21" font-size="7.25" fill="#262626" textLength="34.59" lengthAdjust="spacingAndGlyphs" stroke="#262626" stroke-width="0.15">B.Silkscreen</text>
<rect x="882.20" y="190.54" width="8.40" height="7.60" fill="#4e2a6e"/>
<circle cx="897.8" cy="194.34" r="3.5" fill="#e6e6e6" stroke="#3c3c3c" stroke-width="1.3"/>
<ellipse cx="897.6" cy="194.34" rx="1.9" ry="1.1" fill="none" stroke="#666" stroke-width="0.6"/>
<text x="905.00" y="197.64" font-size="7.25" fill="#262626" textLength="20.58" lengthAdjust="spacingAndGlyphs" stroke="#262626" stroke-width="0.15">F.Mask</text>
<rect x="882.20" y="200.97" width="8.40" height="7.60" fill="#0b5f58"/>
<circle cx="897.8" cy="204.77" r="3.5" fill="#e6e6e6" stroke="#3c3c3c" stroke-width="1.3"/>
<ellipse cx="897.6" cy="204.77" rx="1.9" ry="1.1" fill="none" stroke="#666" stroke-width="0.6"/>
<text x="905.00" y="208.07" font-size="7.25" fill="#262626" textLength="21.26" lengthAdjust="spacingAndGlyphs" stroke="#262626" stroke-width="0.15">B.Mask</text>
<rect x="882.20" y="211.40" width="8.40" height="7.60" fill="#c2c2c2"/>
<circle cx="897.8" cy="215.20" r="3.5" fill="#e6e6e6" stroke="#3c3c3c" stroke-width="1.3"/>
<ellipse cx="897.6" cy="215.20" rx="1.9" ry="1.1" fill="none" stroke="#666" stroke-width="0.6"/>
<text x="905.00" y="218.50" font-size="7.25" fill="#262626" textLength="43.61" lengthAdjust="spacingAndGlyphs" stroke="#262626" stroke-width="0.15">User.Drawings</text>
<rect x="882.20" y="221.83" width="8.40" height="7.60" fill="#5994dc"/>
<circle cx="897.8" cy="225.63" r="3.5" fill="#e6e6e6" stroke="#3c3c3c" stroke-width="1.3"/>
<ellipse cx="897.6" cy="225.63" rx="1.9" ry="1.1" fill="none" stroke="#666" stroke-width="0.6"/>
<text x="905.00" y="228.93" font-size="7.25" fill="#262626" textLength="47.59" lengthAdjust="spacingAndGlyphs" stroke="#262626" stroke-width="0.15">User.Comments</text>
<rect x="882.20" y="232.26" width="8.40" height="7.60" fill="#b4dbd2"/>
<circle cx="897.8" cy="236.06" r="3.5" fill="#e6e6e6" stroke="#3c3c3c" stroke-width="1.3"/>
<ellipse cx="897.6" cy="236.06" rx="1.9" ry="1.1" fill="none" stroke="#666" stroke-width="0.6"/>
<text x="905.00" y="239.36" font-size="7.25" fill="#262626" textLength="29.59" lengthAdjust="spacingAndGlyphs" stroke="#262626" stroke-width="0.15">User.Eco1</text>
<rect x="882.20" y="242.69" width="8.40" height="7.60" fill="#d8c852"/>
<circle cx="897.8" cy="246.49" r="3.5" fill="#e6e6e6" stroke="#3c3c3c" stroke-width="1.3"/>
<ellipse cx="897.6" cy="246.49" rx="1.9" ry="1.1" fill="none" stroke="#666" stroke-width="0.6"/>
<text x="905.00" y="249.79" font-size="7.25" fill="#262626" textLength="30.42" lengthAdjust="spacingAndGlyphs" stroke="#262626" stroke-width="0.15">User.Eco2</text>
<rect x="882.20" y="253.12" width="8.40" height="7.60" fill="#d0d2cd"/>
<circle cx="897.8" cy="256.92" r="3.5" fill="#e6e6e6" stroke="#3c3c3c" stroke-width="1.3"/>
<ellipse cx="897.6" cy="256.92" rx="1.9" ry="1.1" fill="none" stroke="#666" stroke-width="0.6"/>
<text x="905.00" y="260.22" font-size="7.25" fill="#262626" textLength="30.79" lengthAdjust="spacingAndGlyphs" stroke="#262626" stroke-width="0.15">Edge.Cuts</text>
<rect x="882.20" y="263.55" width="8.40" height="7.60" fill="#ff26e2"/>
<circle cx="897.8" cy="267.35" r="3.5" fill="#e6e6e6" stroke="#3c3c3c" stroke-width="1.3"/>
<ellipse cx="897.6" cy="267.35" rx="1.9" ry="1.1" fill="none" stroke="#666" stroke-width="0.6"/>
<text x="905.00" y="270.65" font-size="7.25" fill="#262626" textLength="20.16" lengthAdjust="spacingAndGlyphs" stroke="#262626" stroke-width="0.15">Margin</text>
<rect x="882.20" y="273.98" width="8.40" height="7.60" fill="#ff26e2"/>
<circle cx="897.8" cy="277.78" r="3.5" fill="#e6e6e6" stroke="#3c3c3c" stroke-width="1.3"/>
<ellipse cx="897.6" cy="277.78" rx="1.9" ry="1.1" fill="none" stroke="#666" stroke-width="0.6"/>
<text x="905.00" y="281.08" font-size="7.25" fill="#262626" textLength="34.08" lengthAdjust="spacingAndGlyphs" stroke="#262626" stroke-width="0.15">F.Courtyard</text>
<rect x="882.20" y="284.41" width="8.40" height="7.60" fill="#26e9ff"/>
<circle cx="897.8" cy="288.21" r="3.5" fill="#e6e6e6" stroke="#3c3c3c" stroke-width="1.3"/>
<ellipse cx="897.6" cy="288.21" rx="1.9" ry="1.1" fill="none" stroke="#666" stroke-width="0.6"/>
<text x="905.00" y="291.51" font-size="7.25" fill="#262626" textLength="35.18" lengthAdjust="spacingAndGlyphs" stroke="#262626" stroke-width="0.15">B.Courtyard</text>
<rect x="882.20" y="294.84" width="8.40" height="7.60" fill="#afafaf"/>
<circle cx="897.8" cy="298.64" r="3.5" fill="#e6e6e6" stroke="#3c3c3c" stroke-width="1.3"/>
<ellipse cx="897.6" cy="298.64" rx="1.9" ry="1.1" fill="none" stroke="#666" stroke-width="0.6"/>
<text x="905.00" y="301.94" font-size="7.25" fill="#262626" textLength="16.49" lengthAdjust="spacingAndGlyphs" stroke="#262626" stroke-width="0.15">F.Fab</text>
<rect x="882.20" y="305.27" width="8.40" height="7.60" fill="#585d84"/>
<circle cx="897.8" cy="309.07" r="3.5" fill="#e6e6e6" stroke="#3c3c3c" stroke-width="1.3"/>
<ellipse cx="897.6" cy="309.07" rx="1.9" ry="1.1" fill="none" stroke="#666" stroke-width="0.6"/>
<text x="905.00" y="312.37" font-size="7.25" fill="#262626" textLength="17.59" lengthAdjust="spacingAndGlyphs" stroke="#262626" stroke-width="0.15">B.Fab</text>
<rect x="882.20" y="315.70" width="8.40" height="7.60" fill="#c2c2c2"/>
<circle cx="897.8" cy="319.50" r="3.5" fill="#e6e6e6" stroke="#3c3c3c" stroke-width="1.3"/>
<ellipse cx="897.6" cy="319.50" rx="1.9" ry="1.1" fill="none" stroke="#666" stroke-width="0.6"/>
<text x="905.00" y="322.80" font-size="7.25" fill="#262626" textLength="19.06" lengthAdjust="spacingAndGlyphs" stroke="#262626" stroke-width="0.15">User.1</text>
<rect x="882.20" y="326.13" width="8.40" height="7.60" fill="#5994dc"/>
<circle cx="897.8" cy="329.93" r="3.5" fill="#e6e6e6" stroke="#3c3c3c" stroke-width="1.3"/>
<ellipse cx="897.6" cy="329.93" rx="1.9" ry="1.1" fill="none" stroke="#666" stroke-width="0.6"/>
<text x="905.00" y="333.23" font-size="7.25" fill="#262626" textLength="19.06" lengthAdjust="spacingAndGlyphs" stroke="#262626" stroke-width="0.15">User.2</text>
<rect x="871.00" y="336.80" width="125.00" height="13.20" fill="#fafafa"/>
<path d="M879.6 340.2 L882.6 343.2 L879.6 346.2 Z" fill="#111"/>
<text x="883.40" y="345.80" font-size="7.25" fill="#262626" textLength="65.82" lengthAdjust="spacingAndGlyphs" stroke="#262626" stroke-width="0.15">Layer Display Options</text>
<text x="874.00" y="364.60" font-size="7.25" fill="#262626" textLength="55.79" lengthAdjust="spacingAndGlyphs" stroke="#262626" stroke-width="0.15">Presets (Ctrl+Tab):</text>
<rect x="873.8" y="368.6" width="123" height="13.4" fill="#ffffff" stroke="#e2e2e2" stroke-width="0.8"/>
<line x1="876.00" y1="375.60" x2="884.00" y2="375.60" stroke="#555" stroke-width="0.8" stroke-dasharray="2 0.8"/>
<path d="M989.2 373.6 L991.6 376 L994 373.6" fill="none" stroke="#606060" stroke-width="0.8"/>
<text x="874.00" y="392.00" font-size="7.25" fill="#262626" textLength="66.81" lengthAdjust="spacingAndGlyphs" stroke="#262626" stroke-width="0.15">Viewports (Shift+Tab):</text>
<rect x="873.8" y="395.8" width="123" height="13.4" fill="#ffffff" stroke="#e2e2e2" stroke-width="0.8"/>
<line x1="876.00" y1="402.80" x2="884.00" y2="402.80" stroke="#555" stroke-width="0.8" stroke-dasharray="2 0.8"/>
<path d="M989.2 400.8 L991.6 403.2 L994 400.8" fill="none" stroke="#606060" stroke-width="0.8"/>
<rect x="870.50" y="415.50" width="129.50" height="12.50" fill="#b9b9b9"/>
<text x="872.50" y="424.30" font-size="7.83" fill="#262626" textLength="51.24" lengthAdjust="spacingAndGlyphs" stroke="#262626" stroke-width="0.15">Selection Filter</text>
<rect x="873" y="432.80" width="8" height="8" rx="1.3" fill="#1666c0"/>
<path d="M874.8 436.80 l1.6 1.7 l3 -3.2" fill="none" stroke="#fff" stroke-width="0.8"/>
<text x="883.00" y="439.40" font-size="7.25" fill="#262626" textLength="24.92" lengthAdjust="spacingAndGlyphs" stroke="#262626" stroke-width="0.15">All items</text>
<rect x="928.4" y="433.20" width="7.2" height="7.2" rx="1.3" fill="#fff" stroke="#5a5a5a" stroke-width="0.8"/>
<text x="938.00" y="439.40" font-size="7.25" fill="#262626" textLength="38.85" lengthAdjust="spacingAndGlyphs" stroke="#262626" stroke-width="0.15">Locked items</text>
<rect x="873" y="443.25" width="8" height="8" rx="1.3" fill="#1666c0"/>
<path d="M874.8 447.25 l1.6 1.7 l3 -3.2" fill="none" stroke="#fff" stroke-width="0.8"/>
<text x="883.00" y="449.85" font-size="7.25" fill="#262626" textLength="29.32" lengthAdjust="spacingAndGlyphs" stroke="#262626" stroke-width="0.15">Footprints</text>
<rect x="928" y="443.25" width="8" height="8" rx="1.3" fill="#1666c0"/>
<path d="M929.8 447.25 l1.6 1.7 l3 -3.2" fill="none" stroke="#fff" stroke-width="0.8"/>
<text x="938.00" y="449.85" font-size="7.25" fill="#262626" textLength="12.09" lengthAdjust="spacingAndGlyphs" stroke="#262626" stroke-width="0.15">Text</text>
<rect x="873" y="453.70" width="8" height="8" rx="1.3" fill="#1666c0"/>
<path d="M874.8 457.70 l1.6 1.7 l3 -3.2" fill="none" stroke="#fff" stroke-width="0.8"/>
<text x="883.00" y="460.30" font-size="7.25" fill="#262626" textLength="19.54" lengthAdjust="spacingAndGlyphs" stroke="#262626" stroke-width="0.15">Tracks</text>
<rect x="928" y="453.70" width="8" height="8" rx="1.3" fill="#1666c0"/>
<path d="M929.8 457.70 l1.6 1.7 l3 -3.2" fill="none" stroke="#fff" stroke-width="0.8"/>
<text x="938.00" y="460.30" font-size="7.25" fill="#262626" textLength="12.71" lengthAdjust="spacingAndGlyphs" stroke="#262626" stroke-width="0.15">Vias</text>
<rect x="873" y="464.15" width="8" height="8" rx="1.3" fill="#1666c0"/>
<path d="M874.8 468.15 l1.6 1.7 l3 -3.2" fill="none" stroke="#fff" stroke-width="0.8"/>
<text x="883.00" y="470.75" font-size="7.25" fill="#262626" textLength="15.03" lengthAdjust="spacingAndGlyphs" stroke="#262626" stroke-width="0.15">Pads</text>
<rect x="928" y="464.15" width="8" height="8" rx="1.3" fill="#1666c0"/>
<path d="M929.8 468.15 l1.6 1.7 l3 -3.2" fill="none" stroke="#fff" stroke-width="0.8"/>
<text x="938.00" y="470.75" font-size="7.25" fill="#262626" textLength="26.39" lengthAdjust="spacingAndGlyphs" stroke="#262626" stroke-width="0.15">Graphics</text>
<rect x="873" y="474.60" width="8" height="8" rx="1.3" fill="#1666c0"/>
<path d="M874.8 478.60 l1.6 1.7 l3 -3.2" fill="none" stroke="#fff" stroke-width="0.8"/>
<text x="883.00" y="481.20" font-size="7.25" fill="#262626" textLength="18.33" lengthAdjust="spacingAndGlyphs" stroke="#262626" stroke-width="0.15">Zones</text>
<rect x="928" y="474.60" width="8" height="8" rx="1.3" fill="#1666c0"/>
<path d="M929.8 478.60 l1.6 1.7 l3 -3.2" fill="none" stroke="#fff" stroke-width="0.8"/>
<text x="938.00" y="481.20" font-size="7.25" fill="#262626" textLength="32.26" lengthAdjust="spacingAndGlyphs" stroke="#262626" stroke-width="0.15">Rule Areas</text>
<rect x="873" y="485.05" width="8" height="8" rx="1.3" fill="#1666c0"/>
<path d="M874.8 489.05 l1.6 1.7 l3 -3.2" fill="none" stroke="#fff" stroke-width="0.8"/>
<text x="883.00" y="491.65" font-size="7.25" fill="#262626" textLength="34.45" lengthAdjust="spacingAndGlyphs" stroke="#262626" stroke-width="0.15">Dimensions</text>
<rect x="928" y="485.05" width="8" height="8" rx="1.3" fill="#1666c0"/>
<path d="M929.8 489.05 l1.6 1.7 l3 -3.2" fill="none" stroke="#fff" stroke-width="0.8"/>
<text x="938.00" y="491.65" font-size="7.25" fill="#262626" textLength="34.08" lengthAdjust="spacingAndGlyphs" stroke="#262626" stroke-width="0.15">Other items</text>
<text x="7.20" y="505.00" font-size="8.12" fill="#1b1b1b" textLength="17.02" lengthAdjust="spacingAndGlyphs" stroke="#1b1b1b" stroke-width="0.15">Pads</text>
<text x="7.20" y="515.80" font-size="8.12" fill="#1b1b1b" textLength="8.31" lengthAdjust="spacingAndGlyphs" stroke="#1b1b1b" stroke-width="0.15">60</text>
<text x="43.20" y="505.00" font-size="8.12" fill="#1b1b1b" textLength="14.39" lengthAdjust="spacingAndGlyphs" stroke="#1b1b1b" stroke-width="0.15">Vias</text>
<text x="43.20" y="515.80" font-size="8.12" fill="#1b1b1b" textLength="4.15" lengthAdjust="spacingAndGlyphs" stroke="#1b1b1b" stroke-width="0.15">0</text>
<text x="77.30" y="505.00" font-size="8.12" fill="#1b1b1b" textLength="54.08" lengthAdjust="spacingAndGlyphs" stroke="#1b1b1b" stroke-width="0.15">Track Segments</text>
<text x="77.30" y="515.80" font-size="8.12" fill="#1b1b1b" textLength="4.15" lengthAdjust="spacingAndGlyphs" stroke="#1b1b1b" stroke-width="0.15">0</text>
<text x="151.20" y="505.00" font-size="8.12" fill="#1b1b1b" textLength="15.35" lengthAdjust="spacingAndGlyphs" stroke="#1b1b1b" stroke-width="0.15">Nets</text>
<text x="151.20" y="515.80" font-size="8.12" fill="#1b1b1b" textLength="8.31" lengthAdjust="spacingAndGlyphs" stroke="#1b1b1b" stroke-width="0.15">26</text>
<text x="186.70" y="505.00" font-size="8.12" fill="#1b1b1b" textLength="30.72" lengthAdjust="spacingAndGlyphs" stroke="#1b1b1b" stroke-width="0.15">Unrouted</text>
<text x="186.70" y="515.80" font-size="8.12" fill="#1b1b1b" textLength="8.31" lengthAdjust="spacingAndGlyphs" stroke="#1b1b1b" stroke-width="0.15">20</text>
<line x1="303.90" y1="518.00" x2="303.90" y2="531.00" stroke="#d8d8d8" stroke-width="1"/>
<line x1="750.00" y1="518.00" x2="750.00" y2="531.00" stroke="#d8d8d8" stroke-width="1"/>
<line x1="789.70" y1="518.00" x2="789.70" y2="531.00" stroke="#d8d8d8" stroke-width="1"/>
<line x1="902.00" y1="518.00" x2="902.00" y2="531.00" stroke="#d8d8d8" stroke-width="1"/>
<text x="307.20" y="527.80" font-size="7.97" fill="#1b1b1b" textLength="21.80" lengthAdjust="spacingAndGlyphs" xml:space="preserve" stroke="#1b1b1b" stroke-width="0.15">Z 3.49</text>
<text x="357.70" y="527.80" font-size="7.97" fill="#1b1b1b" textLength="74.90" lengthAdjust="spacingAndGlyphs" xml:space="preserve" stroke="#1b1b1b" stroke-width="0.15">X 171.0000  Y 61.5000</text>
<text x="463.30" y="527.80" font-size="7.97" fill="#1b1b1b" textLength="132.00" lengthAdjust="spacingAndGlyphs" xml:space="preserve" stroke="#1b1b1b" stroke-width="0.15">dx 171.0000  dy 61.5000  dist 181.7230</text>
<text x="630.60" y="527.80" font-size="7.97" fill="#1b1b1b" textLength="38.59" lengthAdjust="spacingAndGlyphs" xml:space="preserve" stroke="#1b1b1b" stroke-width="0.15">grid 0.5000</text>
<text x="753.40" y="527.80" font-size="7.97" fill="#1b1b1b" textLength="12.61" lengthAdjust="spacingAndGlyphs" xml:space="preserve" stroke="#1b1b1b" stroke-width="0.15">mm</text>
<text x="792.30" y="527.80" font-size="7.97" fill="#1b1b1b" textLength="46.88" lengthAdjust="spacingAndGlyphs" xml:space="preserve" stroke="#1b1b1b" stroke-width="0.15">Select item(s)</text>
<defs><clipPath id="cv"><rect x="23" y="74" width="821" height="422"/></clipPath></defs>
<g clip-path="url(#cv)">
<path d="M31.0 84.0h1.1v1.1h-1.1zM31.0 116.5h1.1v1.1h-1.1zM31.0 149.0h1.1v1.1h-1.1zM31.0 181.5h1.1v1.1h-1.1zM31.0 214.0h1.1v1.1h-1.1zM31.0 246.5h1.1v1.1h-1.1zM31.0 279.0h1.1v1.1h-1.1zM31.0 311.5h1.1v1.1h-1.1zM31.0 344.0h1.1v1.1h-1.1zM31.0 376.5h1.1v1.1h-1.1zM31.0 409.0h1.1v1.1h-1.1zM31.0 441.5h1.1v1.1h-1.1zM31.0 474.0h1.1v1.1h-1.1zM63.5 84.0h1.1v1.1h-1.1zM63.5 116.5h1.1v1.1h-1.1zM63.5 149.0h1.1v1.1h-1.1zM63.5 181.5h1.1v1.1h-1.1zM63.5 214.0h1.1v1.1h-1.1zM63.5 246.5h1.1v1.1h-1.1zM63.5 279.0h1.1v1.1h-1.1zM63.5 311.5h1.1v1.1h-1.1zM63.5 344.0h1.1v1.1h-1.1zM63.5 376.5h1.1v1.1h-1.1zM63.5 409.0h1.1v1.1h-1.1zM63.5 441.5h1.1v1.1h-1.1zM63.5 474.0h1.1v1.1h-1.1zM96.1 84.0h1.1v1.1h-1.1zM96.1 116.5h1.1v1.1h-1.1zM96.1 149.0h1.1v1.1h-1.1zM96.1 181.5h1.1v1.1h-1.1zM96.1 214.0h1.1v1.1h-1.1zM96.1 246.5h1.1v1.1h-1.1zM96.1 279.0h1.1v1.1h-1.1zM96.1 311.5h1.1v1.1h-1.1zM96.1 344.0h1.1v1.1h-1.1zM96.1 376.5h1.1v1.1h-1.1zM96.1 409.0h1.1v1.1h-1.1zM96.1 441.5h1.1v1.1h-1.1zM96.1 474.0h1.1v1.1h-1.1zM128.6 84.0h1.1v1.1h-1.1zM128.6 116.5h1.1v1.1h-1.1zM128.6 149.0h1.1v1.1h-1.1zM128.6 181.5h1.1v1.1h-1.1zM128.6 214.0h1.1v1.1h-1.1zM128.6 246.5h1.1v1.1h-1.1zM128.6 279.0h1.1v1.1h-1.1zM128.6 311.5h1.1v1.1h-1.1zM128.6 344.0h1.1v1.1h-1.1zM128.6 376.5h1.1v1.1h-1.1zM128.6 409.0h1.1v1.1h-1.1zM128.6 441.5h1.1v1.1h-1.1zM128.6 474.0h1.1v1.1h-1.1zM161.2 84.0h1.1v1.1h-1.1zM161.2 116.5h1.1v1.1h-1.1zM161.2 149.0h1.1v1.1h-1.1zM161.2 181.5h1.1v1.1h-1.1zM161.2 214.0h1.1v1.1h-1.1zM161.2 246.5h1.1v1.1h-1.1zM161.2 279.0h1.1v1.1h-1.1zM161.2 311.5h1.1v1.1h-1.1zM161.2 344.0h1.1v1.1h-1.1zM161.2 376.5h1.1v1.1h-1.1zM161.2 409.0h1.1v1.1h-1.1zM161.2 441.5h1.1v1.1h-1.1zM161.2 474.0h1.1v1.1h-1.1zM193.8 84.0h1.1v1.1h-1.1zM193.8 116.5h1.1v1.1h-1.1zM193.8 149.0h1.1v1.1h-1.1zM193.8 181.5h1.1v1.1h-1.1zM193.8 214.0h1.1v1.1h-1.1zM193.8 246.5h1.1v1.1h-1.1zM193.8 279.0h1.1v1.1h-1.1zM193.8 311.5h1.1v1.1h-1.1zM193.8 344.0h1.1v1.1h-1.1zM193.8 376.5h1.1v1.1h-1.1zM193.8 409.0h1.1v1.1h-1.1zM193.8 441.5h1.1v1.1h-1.1zM193.8 474.0h1.1v1.1h-1.1zM226.3 84.0h1.1v1.1h-1.1zM226.3 116.5h1.1v1.1h-1.1zM226.3 149.0h1.1v1.1h-1.1zM226.3 181.5h1.1v1.1h-1.1zM226.3 214.0h1.1v1.1h-1.1zM226.3 246.5h1.1v1.1h-1.1zM226.3 279.0h1.1v1.1h-1.1zM226.3 311.5h1.1v1.1h-1.1zM226.3 344.0h1.1v1.1h-1.1zM226.3 376.5h1.1v1.1h-1.1zM226.3 409.0h1.1v1.1h-1.1zM226.3 441.5h1.1v1.1h-1.1zM226.3 474.0h1.1v1.1h-1.1zM258.8 84.0h1.1v1.1h-1.1zM258.8 116.5h1.1v1.1h-1.1zM258.8 149.0h1.1v1.1h-1.1zM258.8 181.5h1.1v1.1h-1.1zM258.8 214.0h1.1v1.1h-1.1zM258.8 246.5h1.1v1.1h-1.1zM258.8 279.0h1.1v1.1h-1.1zM258.8 311.5h1.1v1.1h-1.1zM258.8 344.0h1.1v1.1h-1.1zM258.8 376.5h1.1v1.1h-1.1zM258.8 409.0h1.1v1.1h-1.1zM258.8 441.5h1.1v1.1h-1.1zM258.8 474.0h1.1v1.1h-1.1zM291.4 84.0h1.1v1.1h-1.1zM291.4 116.5h1.1v1.1h-1.1zM291.4 149.0h1.1v1.1h-1.1zM291.4 181.5h1.1v1.1h-1.1zM291.4 214.0h1.1v1.1h-1.1zM291.4 246.5h1.1v1.1h-1.1zM291.4 279.0h1.1v1.1h-1.1zM291.4 311.5h1.1v1.1h-1.1zM291.4 344.0h1.1v1.1h-1.1zM291.4 376.5h1.1v1.1h-1.1zM291.4 409.0h1.1v1.1h-1.1zM291.4 441.5h1.1v1.1h-1.1zM291.4 474.0h1.1v1.1h-1.1zM323.9 84.0h1.1v1.1h-1.1zM323.9 116.5h1.1v1.1h-1.1zM323.9 149.0h1.1v1.1h-1.1zM323.9 181.5h1.1v1.1h-1.1zM323.9 214.0h1.1v1.1h-1.1zM323.9 246.5h1.1v1.1h-1.1zM323.9 279.0h1.1v1.1h-1.1zM323.9 311.5h1.1v1.1h-1.1zM323.9 344.0h1.1v1.1h-1.1zM323.9 376.5h1.1v1.1h-1.1zM323.9 409.0h1.1v1.1h-1.1zM323.9 441.5h1.1v1.1h-1.1zM323.9 474.0h1.1v1.1h-1.1zM356.5 84.0h1.1v1.1h-1.1zM356.5 116.5h1.1v1.1h-1.1zM356.5 149.0h1.1v1.1h-1.1zM356.5 181.5h1.1v1.1h-1.1zM356.5 214.0h1.1v1.1h-1.1zM356.5 246.5h1.1v1.1h-1.1zM356.5 279.0h1.1v1.1h-1.1zM356.5 311.5h1.1v1.1h-1.1zM356.5 344.0h1.1v1.1h-1.1zM356.5 376.5h1.1v1.1h-1.1zM356.5 409.0h1.1v1.1h-1.1zM356.5 441.5h1.1v1.1h-1.1zM356.5 474.0h1.1v1.1h-1.1zM389.0 84.0h1.1v1.1h-1.1zM389.0 116.5h1.1v1.1h-1.1zM389.0 149.0h1.1v1.1h-1.1zM389.0 181.5h1.1v1.1h-1.1zM389.0 214.0h1.1v1.1h-1.1zM389.0 246.5h1.1v1.1h-1.1zM389.0 279.0h1.1v1.1h-1.1zM389.0 311.5h1.1v1.1h-1.1zM389.0 344.0h1.1v1.1h-1.1zM389.0 376.5h1.1v1.1h-1.1zM389.0 409.0h1.1v1.1h-1.1zM389.0 441.5h1.1v1.1h-1.1zM389.0 474.0h1.1v1.1h-1.1zM421.6 84.0h1.1v1.1h-1.1zM421.6 116.5h1.1v1.1h-1.1zM421.6 149.0h1.1v1.1h-1.1zM421.6 181.5h1.1v1.1h-1.1zM421.6 214.0h1.1v1.1h-1.1zM421.6 246.5h1.1v1.1h-1.1zM421.6 279.0h1.1v1.1h-1.1zM421.6 311.5h1.1v1.1h-1.1zM421.6 344.0h1.1v1.1h-1.1zM421.6 376.5h1.1v1.1h-1.1zM421.6 409.0h1.1v1.1h-1.1zM421.6 441.5h1.1v1.1h-1.1zM421.6 474.0h1.1v1.1h-1.1zM454.1 84.0h1.1v1.1h-1.1zM454.1 116.5h1.1v1.1h-1.1zM454.1 149.0h1.1v1.1h-1.1zM454.1 181.5h1.1v1.1h-1.1zM454.1 214.0h1.1v1.1h-1.1zM454.1 246.5h1.1v1.1h-1.1zM454.1 279.0h1.1v1.1h-1.1zM454.1 311.5h1.1v1.1h-1.1zM454.1 344.0h1.1v1.1h-1.1zM454.1 376.5h1.1v1.1h-1.1zM454.1 409.0h1.1v1.1h-1.1zM454.1 441.5h1.1v1.1h-1.1zM454.1 474.0h1.1v1.1h-1.1zM486.7 84.0h1.1v1.1h-1.1zM486.7 116.5h1.1v1.1h-1.1zM486.7 149.0h1.1v1.1h-1.1zM486.7 181.5h1.1v1.1h-1.1zM486.7 214.0h1.1v1.1h-1.1zM486.7 246.5h1.1v1.1h-1.1zM486.7 279.0h1.1v1.1h-1.1zM486.7 311.5h1.1v1.1h-1.1zM486.7 344.0h1.1v1.1h-1.1zM486.7 376.5h1.1v1.1h-1.1zM486.7 409.0h1.1v1.1h-1.1zM486.7 441.5h1.1v1.1h-1.1zM486.7 474.0h1.1v1.1h-1.1zM519.2 84.0h1.1v1.1h-1.1zM519.2 116.5h1.1v1.1h-1.1zM519.2 149.0h1.1v1.1h-1.1zM519.2 181.5h1.1v1.1h-1.1zM519.2 214.0h1.1v1.1h-1.1zM519.2 246.5h1.1v1.1h-1.1zM519.2 279.0h1.1v1.1h-1.1zM519.2 311.5h1.1v1.1h-1.1zM519.2 344.0h1.1v1.1h-1.1zM519.2 376.5h1.1v1.1h-1.1zM519.2 409.0h1.1v1.1h-1.1zM519.2 441.5h1.1v1.1h-1.1zM519.2 474.0h1.1v1.1h-1.1zM551.8 84.0h1.1v1.1h-1.1zM551.8 116.5h1.1v1.1h-1.1zM551.8 149.0h1.1v1.1h-1.1zM551.8 181.5h1.1v1.1h-1.1zM551.8 214.0h1.1v1.1h-1.1zM551.8 246.5h1.1v1.1h-1.1zM551.8 279.0h1.1v1.1h-1.1zM551.8 311.5h1.1v1.1h-1.1zM551.8 344.0h1.1v1.1h-1.1zM551.8 376.5h1.1v1.1h-1.1zM551.8 409.0h1.1v1.1h-1.1zM551.8 441.5h1.1v1.1h-1.1zM551.8 474.0h1.1v1.1h-1.1zM584.3 84.0h1.1v1.1h-1.1zM584.3 116.5h1.1v1.1h-1.1zM584.3 149.0h1.1v1.1h-1.1zM584.3 181.5h1.1v1.1h-1.1zM584.3 214.0h1.1v1.1h-1.1zM584.3 246.5h1.1v1.1h-1.1zM584.3 279.0h1.1v1.1h-1.1zM584.3 311.5h1.1v1.1h-1.1zM584.3 344.0h1.1v1.1h-1.1zM584.3 376.5h1.1v1.1h-1.1zM584.3 409.0h1.1v1.1h-1.1zM584.3 441.5h1.1v1.1h-1.1zM584.3 474.0h1.1v1.1h-1.1zM616.9 84.0h1.1v1.1h-1.1zM616.9 116.5h1.1v1.1h-1.1zM616.9 149.0h1.1v1.1h-1.1zM616.9 181.5h1.1v1.1h-1.1zM616.9 214.0h1.1v1.1h-1.1zM616.9 246.5h1.1v1.1h-1.1zM616.9 279.0h1.1v1.1h-1.1zM616.9 311.5h1.1v1.1h-1.1zM616.9 344.0h1.1v1.1h-1.1zM616.9 376.5h1.1v1.1h-1.1zM616.9 409.0h1.1v1.1h-1.1zM616.9 441.5h1.1v1.1h-1.1zM616.9 474.0h1.1v1.1h-1.1zM649.4 84.0h1.1v1.1h-1.1zM649.4 116.5h1.1v1.1h-1.1zM649.4 149.0h1.1v1.1h-1.1zM649.4 181.5h1.1v1.1h-1.1zM649.4 214.0h1.1v1.1h-1.1zM649.4 246.5h1.1v1.1h-1.1zM649.4 279.0h1.1v1.1h-1.1zM649.4 311.5h1.1v1.1h-1.1zM649.4 344.0h1.1v1.1h-1.1zM649.4 376.5h1.1v1.1h-1.1zM649.4 409.0h1.1v1.1h-1.1zM649.4 441.5h1.1v1.1h-1.1zM649.4 474.0h1.1v1.1h-1.1zM682.0 84.0h1.1v1.1h-1.1zM682.0 116.5h1.1v1.1h-1.1zM682.0 149.0h1.1v1.1h-1.1zM682.0 181.5h1.1v1.1h-1.1zM682.0 214.0h1.1v1.1h-1.1zM682.0 246.5h1.1v1.1h-1.1zM682.0 279.0h1.1v1.1h-1.1zM682.0 311.5h1.1v1.1h-1.1zM682.0 344.0h1.1v1.1h-1.1zM682.0 376.5h1.1v1.1h-1.1zM682.0 409.0h1.1v1.1h-1.1zM682.0 441.5h1.1v1.1h-1.1zM682.0 474.0h1.1v1.1h-1.1zM714.5 84.0h1.1v1.1h-1.1zM714.5 116.5h1.1v1.1h-1.1zM714.5 149.0h1.1v1.1h-1.1zM714.5 181.5h1.1v1.1h-1.1zM714.5 214.0h1.1v1.1h-1.1zM714.5 246.5h1.1v1.1h-1.1zM714.5 279.0h1.1v1.1h-1.1zM714.5 311.5h1.1v1.1h-1.1zM714.5 344.0h1.1v1.1h-1.1zM714.5 376.5h1.1v1.1h-1.1zM714.5 409.0h1.1v1.1h-1.1zM714.5 441.5h1.1v1.1h-1.1zM714.5 474.0h1.1v1.1h-1.1zM747.1 84.0h1.1v1.1h-1.1zM747.1 116.5h1.1v1.1h-1.1zM747.1 149.0h1.1v1.1h-1.1zM747.1 181.5h1.1v1.1h-1.1zM747.1 214.0h1.1v1.1h-1.1zM747.1 246.5h1.1v1.1h-1.1zM747.1 279.0h1.1v1.1h-1.1zM747.1 311.5h1.1v1.1h-1.1zM747.1 344.0h1.1v1.1h-1.1zM747.1 376.5h1.1v1.1h-1.1zM747.1 409.0h1.1v1.1h-1.1zM747.1 441.5h1.1v1.1h-1.1zM747.1 474.0h1.1v1.1h-1.1zM779.6 84.0h1.1v1.1h-1.1zM779.6 116.5h1.1v1.1h-1.1zM779.6 149.0h1.1v1.1h-1.1zM779.6 181.5h1.1v1.1h-1.1zM779.6 214.0h1.1v1.1h-1.1zM779.6 246.5h1.1v1.1h-1.1zM779.6 279.0h1.1v1.1h-1.1zM779.6 311.5h1.1v1.1h-1.1zM779.6 344.0h1.1v1.1h-1.1zM779.6 376.5h1.1v1.1h-1.1zM779.6 409.0h1.1v1.1h-1.1zM779.6 441.5h1.1v1.1h-1.1zM779.6 474.0h1.1v1.1h-1.1zM812.2 84.0h1.1v1.1h-1.1zM812.2 116.5h1.1v1.1h-1.1zM812.2 149.0h1.1v1.1h-1.1zM812.2 181.5h1.1v1.1h-1.1zM812.2 214.0h1.1v1.1h-1.1zM812.2 246.5h1.1v1.1h-1.1zM812.2 279.0h1.1v1.1h-1.1zM812.2 311.5h1.1v1.1h-1.1zM812.2 344.0h1.1v1.1h-1.1zM812.2 376.5h1.1v1.1h-1.1zM812.2 409.0h1.1v1.1h-1.1zM812.2 441.5h1.1v1.1h-1.1zM812.2 474.0h1.1v1.1h-1.1zM844.7 84.0h1.1v1.1h-1.1zM844.7 116.5h1.1v1.1h-1.1zM844.7 149.0h1.1v1.1h-1.1zM844.7 181.5h1.1v1.1h-1.1zM844.7 214.0h1.1v1.1h-1.1zM844.7 246.5h1.1v1.1h-1.1zM844.7 279.0h1.1v1.1h-1.1zM844.7 311.5h1.1v1.1h-1.1zM844.7 344.0h1.1v1.1h-1.1zM844.7 376.5h1.1v1.1h-1.1zM844.7 409.0h1.1v1.1h-1.1zM844.7 441.5h1.1v1.1h-1.1zM844.7 474.0h1.1v1.1h-1.1z" fill="#3f4959"/>
<line x1="752.60" y1="202.00" x2="752.60" y2="244.00" stroke="#9aa6b4" stroke-width="1"/>
<line x1="731.00" y1="223.40" x2="774.00" y2="223.40" stroke="#9aa6b4" stroke-width="1"/>
<rect x="298.30" y="142.30" width="31.40" height="12.70" fill="none" stroke="#a3259a" stroke-width="1"/>
<rect x="299.10" y="142.80" width="9.90" height="11.80" fill="#5e1a2a"/>
<rect x="300.00" y="143.70" width="8.10" height="10.00" fill="#e2323f"/>
<rect x="319.10" y="142.80" width="9.20" height="11.80" fill="#5e1a2a"/>
<rect x="320.00" y="143.70" width="7.40" height="10.00" fill="#e2323f"/>
<line x1="308.00" y1="141.90" x2="320.00" y2="141.90" stroke="#c850a8" stroke-width="0.9"/>
<line x1="308.00" y1="155.20" x2="320.00" y2="155.20" stroke="#c850a8" stroke-width="0.9"/>
<rect x="309.80" y="144.60" width="9.00" height="8.40" fill="none" stroke="#6a2a5a" stroke-width="0.7"/>
<text x="314.30" y="150.60" font-size="4.6" fill="#8f9fd0" text-anchor="middle">R3</text>
<text x="308.00" y="139.80" font-size="9.86" fill="#ece8ac" textLength="11.98" lengthAdjust="spacingAndGlyphs" font-weight="bold">R3</text>
<text x="296.80" y="164.20" font-size="10.15" fill="#c4c8cc" textLength="34.60" lengthAdjust="spacingAndGlyphs" font-family='"Liberation Mono", monospace' stroke="#c4c8cc" stroke-width="0.25">R_1206</text>
<rect x="375.50" y="120.80" width="65.00" height="48.80" fill="none" stroke="#a3259a" stroke-width="1"/>
<line x1="387.50" y1="124.50" x2="429.30" y2="124.50" stroke="#a0a0a0" stroke-width="1.2"/>
<line x1="387.50" y1="165.80" x2="429.30" y2="165.80" stroke="#a0a0a0" stroke-width="1.2"/>
<line x1="387.50" y1="137.50" x2="387.50" y2="153.00" stroke="#a0a0a0" stroke-width="1"/>
<line x1="429.30" y1="137.50" x2="429.30" y2="153.00" stroke="#a0a0a0" stroke-width="1"/>
<rect x="376.10" y="126.60" width="19.10" height="11.60" fill="#5e1a2a"/>
<rect x="377.00" y="127.50" width="17.30" height="9.80" fill="#e2323f"/>
<text x="385.65" y="131.80" font-size="3.2" fill="#f4c4c4" text-anchor="middle">1</text>
<text x="385.65" y="135.80" font-size="3.2" fill="#f4c4c4" text-anchor="middle">- - -</text>
<rect x="376.10" y="152.10" width="19.10" height="11.60" fill="#5e1a2a"/>
<rect x="377.00" y="153.00" width="17.30" height="9.80" fill="#e2323f"/>
<text x="385.65" y="157.30" font-size="3.2" fill="#f4c4c4" text-anchor="middle">2</text>
<text x="385.65" y="161.30" font-size="3.2" fill="#f4c4c4" text-anchor="middle">- - -</text>
<rect x="421.90" y="126.60" width="18.30" height="11.60" fill="#5e1a2a"/>
<rect x="422.80" y="127.50" width="16.50" height="9.80" fill="#e2323f"/>
<text x="431.05" y="131.80" font-size="3.2" fill="#f4c4c4" text-anchor="middle">1</text>
<text x="431.05" y="135.80" font-size="3.2" fill="#f4c4c4" text-anchor="middle">- - -</text>
<rect x="421.90" y="152.10" width="18.30" height="11.60" fill="#5e1a2a"/>
<rect x="422.80" y="153.00" width="16.50" height="9.80" fill="#e2323f"/>
<text x="431.05" y="157.30" font-size="3.2" fill="#f4c4c4" text-anchor="middle">2</text>
<text x="431.05" y="161.30" font-size="3.2" fill="#f4c4c4" text-anchor="middle">- - -</text>
<circle cx="407.80" cy="145.50" r="10.50" fill="none" stroke="#c4c8cc" stroke-width="0.9"/>
<text x="398.80" y="122.30" font-size="10.0" fill="#ece8ac" textLength="18.02" lengthAdjust="spacingAndGlyphs" font-weight="bold">SW1</text>
<text x="399.20" y="149.00" font-size="11.21" fill="#c4c8cc" textLength="17.30" lengthAdjust="spacingAndGlyphs" font-family='"Liberation Mono", monospace' stroke="#c4c8cc" stroke-width="0.25">SW1</text>
<text x="392.80" y="177.90" font-size="10.45" fill="#c4c8cc" textLength="30.00" lengthAdjust="spacingAndGlyphs" font-family='"Liberation Mono", monospace' stroke="#c4c8cc" stroke-width="0.25">Switch</text>
<rect x="208.00" y="203.50" width="30.50" height="14.00" fill="none" stroke="#a3259a" stroke-width="1"/>
<rect x="208.90" y="204.60" width="8.80" height="11.80" fill="#5e1a2a"/>
<rect x="209.80" y="205.50" width="7.00" height="10.00" fill="#e2323f"/>
<rect x="228.10" y="204.60" width="9.00" height="11.80" fill="#5e1a2a"/>
<rect x="229.00" y="205.50" width="7.20" height="10.00" fill="#e2323f"/>
<line x1="217.80" y1="203.20" x2="228.00" y2="203.20" stroke="#c850a8" stroke-width="0.8"/>
<line x1="217.80" y1="217.80" x2="228.00" y2="217.80" stroke="#c850a8" stroke-width="0.8"/>
<rect x="218.30" y="206.30" width="9.20" height="8.40" fill="none" stroke="#6a2a5a" stroke-width="0.7"/>
<text x="222.90" y="212.30" font-size="4.8" fill="#9aa8d8" text-anchor="middle">R1</text>
<text x="217.00" y="201.90" font-size="10.0" fill="#ece8ac" textLength="11.49" lengthAdjust="spacingAndGlyphs" font-weight="bold">R1</text>
<rect x="246.00" y="203.50" width="34.50" height="14.00" fill="none" stroke="#a3259a" stroke-width="1"/>
<rect x="246.90" y="204.60" width="10.00" height="11.80" fill="#5e1a2a"/>
<rect x="247.80" y="205.50" width="8.20" height="10.00" fill="#e2323f"/>
<rect x="269.10" y="204.60" width="10.60" height="11.80" fill="#5e1a2a"/>
<rect x="270.00" y="205.50" width="8.80" height="10.00" fill="#e2323f"/>
<line x1="257.00" y1="203.20" x2="269.00" y2="203.20" stroke="#c850a8" stroke-width="0.8"/>
<line x1="257.00" y1="217.80" x2="269.00" y2="217.80" stroke="#c850a8" stroke-width="0.8"/>
<rect x="257.50" y="206.30" width="11.00" height="8.40" fill="none" stroke="#6a2a5a" stroke-width="0.7"/>
<text x="263.00" y="212.30" font-size="4.8" fill="#9aa8d8" text-anchor="middle">K</text>
<text x="257.00" y="201.90" font-size="10.0" fill="#ece8ac" textLength="11.98" lengthAdjust="spacingAndGlyphs" font-weight="bold">D1</text>
<rect x="220.50" y="262.00" width="30.70" height="14.00" fill="none" stroke="#a3259a" stroke-width="1"/>
<rect x="221.10" y="263.10" width="9.80" height="11.80" fill="#5e1a2a"/>
<rect x="222.00" y="264.00" width="8.00" height="10.00" fill="#e2323f"/>
<rect x="241.10" y="263.10" width="9.30" height="11.80" fill="#5e1a2a"/>
<rect x="242.00" y="264.00" width="7.50" height="10.00" fill="#e2323f"/>
<line x1="231.00" y1="261.70" x2="241.00" y2="261.70" stroke="#c850a8" stroke-width="0.8"/>
<line x1="231.00" y1="276.30" x2="241.00" y2="276.30" stroke="#c850a8" stroke-width="0.8"/>
<rect x="231.50" y="264.80" width="9.00" height="8.40" fill="none" stroke="#6a2a5a" stroke-width="0.7"/>
<text x="236.00" y="270.80" font-size="4.8" fill="#9aa8d8" text-anchor="middle">R2</text>
<text x="230.00" y="260.40" font-size="10.0" fill="#ece8ac" textLength="11.98" lengthAdjust="spacingAndGlyphs" font-weight="bold">R2</text>
<rect x="259.00" y="262.00" width="34.50" height="14.00" fill="none" stroke="#a3259a" stroke-width="1"/>
<rect x="259.60" y="263.10" width="10.30" height="11.80" fill="#5e1a2a"/>
<rect x="260.50" y="264.00" width="8.50" height="10.00" fill="#e2323f"/>
<rect x="282.10" y="263.10" width="10.30" height="11.80" fill="#5e1a2a"/>
<rect x="283.00" y="264.00" width="8.50" height="10.00" fill="#e2323f"/>
<line x1="270.00" y1="261.70" x2="282.00" y2="261.70" stroke="#c850a8" stroke-width="0.8"/>
<line x1="270.00" y1="276.30" x2="282.00" y2="276.30" stroke="#c850a8" stroke-width="0.8"/>
<rect x="270.50" y="264.80" width="11.00" height="8.40" fill="none" stroke="#6a2a5a" stroke-width="0.7"/>
<text x="276.00" y="270.80" font-size="4.8" fill="#9aa8d8" text-anchor="middle">K</text>
<text x="270.00" y="260.40" font-size="10.0" fill="#ece8ac" textLength="11.98" lengthAdjust="spacingAndGlyphs" font-weight="bold">D2</text>
<text x="205.00" y="227.10" font-size="10.0" fill="#c4c8cc" textLength="37.20" lengthAdjust="spacingAndGlyphs" font-family='"Liberation Mono", monospace' stroke="#c4c8cc" stroke-width="0.25">resistor</text>
<text x="241.20" y="227.10" font-size="10.3" fill="#c4c8cc" textLength="45.31" lengthAdjust="spacingAndGlyphs" font-family='"Liberation Mono", monospace' stroke="#c4c8cc" stroke-width="0.25">LED_1206</text>
<text x="217.00" y="285.30" font-size="10.3" fill="#c4c8cc" textLength="36.20" lengthAdjust="spacingAndGlyphs" font-family='"Liberation Mono", monospace' stroke="#c4c8cc" stroke-width="0.25">Resistor</text>
<text x="252.50" y="285.20" font-size="10.45" fill="#c4c8cc" textLength="46.51" lengthAdjust="spacingAndGlyphs" font-family='"Liberation Mono", monospace' stroke="#c4c8cc" stroke-width="0.25">LED_1206</text>
<rect x="517.20" y="165.80" width="53.50" height="72.70" fill="none" stroke="#a3259a" stroke-width="1"/>
<rect x="553.20" y="169.00" width="17.00" height="66.50" fill="none" stroke="#b8b8b0" stroke-width="1"/>
<rect x="538.30" y="175.50" width="14.70" height="3.80" fill="#474a4a"/>
<line x1="538.30" y1="175.70" x2="553.00" y2="175.70" stroke="#b4b6ac" stroke-width="0.7"/>
<line x1="538.30" y1="179.10" x2="553.00" y2="179.10" stroke="#b4b6ac" stroke-width="0.7"/>
<rect x="519.10" y="170.40" width="19.00" height="14.00" fill="#5e1a2a"/>
<rect x="520.00" y="171.30" width="17.20" height="12.20" fill="#e2323f"/>
<text x="528.60" y="176.80" font-size="3.2" fill="#f4c4c4" text-anchor="middle">1</text>
<text x="528.60" y="180.80" font-size="3.2" fill="#f4c4c4" text-anchor="middle">3V3</text>
<rect x="538.30" y="191.95" width="14.70" height="3.80" fill="#474a4a"/>
<line x1="538.30" y1="192.15" x2="553.00" y2="192.15" stroke="#b4b6ac" stroke-width="0.7"/>
<line x1="538.30" y1="195.55" x2="553.00" y2="195.55" stroke="#b4b6ac" stroke-width="0.7"/>
<rect x="519.10" y="186.85" width="19.00" height="14.00" fill="#5e1a2a"/>
<rect x="520.00" y="187.75" width="17.20" height="12.20" fill="#e2323f"/>
<text x="528.60" y="193.25" font-size="3.2" fill="#f4c4c4" text-anchor="middle">2</text>
<text x="528.60" y="197.25" font-size="3.2" fill="#f4c4c4" text-anchor="middle">GND</text>
<rect x="538.30" y="208.40" width="14.70" height="3.80" fill="#474a4a"/>
<line x1="538.30" y1="208.60" x2="553.00" y2="208.60" stroke="#b4b6ac" stroke-width="0.7"/>
<line x1="538.30" y1="212.00" x2="553.00" y2="212.00" stroke="#b4b6ac" stroke-width="0.7"/>
<rect x="519.10" y="203.30" width="19.00" height="14.00" fill="#5e1a2a"/>
<rect x="520.00" y="204.20" width="17.20" height="12.20" fill="#e2323f"/>
<text x="528.60" y="209.70" font-size="3.2" fill="#f4c4c4" text-anchor="middle">3</text>
<text x="528.60" y="213.70" font-size="3.2" fill="#f4c4c4" text-anchor="middle">D4</text>
<rect x="538.30" y="224.85" width="14.70" height="3.80" fill="#474a4a"/>
<line x1="538.30" y1="225.05" x2="553.00" y2="225.05" stroke="#b4b6ac" stroke-width="0.7"/>
<line x1="538.30" y1="228.45" x2="553.00" y2="228.45" stroke="#b4b6ac" stroke-width="0.7"/>
<rect x="519.10" y="219.75" width="19.00" height="14.00" fill="#5e1a2a"/>
<rect x="520.00" y="220.65" width="17.20" height="12.20" fill="#e2323f"/>
<text x="528.60" y="226.15" font-size="3.2" fill="#f4c4c4" text-anchor="middle">4</text>
<text x="528.60" y="230.15" font-size="3.2" fill="#f4c4c4" text-anchor="middle">D5</text>
<line x1="519.00" y1="168.30" x2="527.00" y2="168.30" stroke="#9a9a9a" stroke-width="0.8"/>
<text x="520.80" y="164.80" font-size="9.57" fill="#ece8ac" textLength="8.22" lengthAdjust="spacingAndGlyphs" font-weight="bold">J1</text>
<text x="-207.80" y="549.30" font-size="9.57" fill="#c4c8cc" textLength="9.61" lengthAdjust="spacingAndGlyphs" stroke="#c4c8cc" stroke-width="0.2" transform="rotate(-90)">J1</text>
<text x="421.70" y="251.10" font-size="11.06" fill="#c4c8cc" textLength="213.78" lengthAdjust="spacingAndGlyphs" font-family='"Liberation Mono", monospace' stroke="#c4c8cc" stroke-width="0.25">PinHeader_01x04_P2.54mm_Horizontal_SMD</text>
<rect x="518.20" y="314.20" width="53.60" height="40.40" fill="none" stroke="#a3259a" stroke-width="1"/>
<rect x="554.20" y="317.20" width="17.30" height="34.10" fill="none" stroke="#b8b8b0" stroke-width="1"/>
<rect x="538.30" y="324.20" width="15.70" height="3.80" fill="#474a4a"/>
<line x1="538.30" y1="324.40" x2="554.00" y2="324.40" stroke="#b4b6ac" stroke-width="0.7"/>
<line x1="538.30" y1="327.80" x2="554.00" y2="327.80" stroke="#b4b6ac" stroke-width="0.7"/>
<rect x="520.30" y="319.50" width="18.90" height="13.20" fill="#5e1a2a"/>
<rect x="521.20" y="320.40" width="17.10" height="11.40" fill="#e2323f"/>
<text x="529.70" y="325.50" font-size="3.2" fill="#f4c4c4" text-anchor="middle">1</text>
<text x="529.70" y="329.50" font-size="3.2" fill="#f4c4c4" text-anchor="middle">3V3</text>
<rect x="538.30" y="340.20" width="15.70" height="3.80" fill="#474a4a"/>
<line x1="538.30" y1="340.40" x2="554.00" y2="340.40" stroke="#b4b6ac" stroke-width="0.7"/>
<line x1="538.30" y1="343.80" x2="554.00" y2="343.80" stroke="#b4b6ac" stroke-width="0.7"/>
<rect x="520.30" y="335.50" width="18.90" height="13.20" fill="#5e1a2a"/>
<rect x="521.20" y="336.40" width="17.10" height="11.40" fill="#e2323f"/>
<text x="529.70" y="341.50" font-size="3.2" fill="#f4c4c4" text-anchor="middle">2</text>
<text x="529.70" y="345.50" font-size="3.2" fill="#f4c4c4" text-anchor="middle">GND</text>
<line x1="520.00" y1="317.00" x2="528.00" y2="317.00" stroke="#9a9a9a" stroke-width="0.8"/>
<text x="520.80" y="313.00" font-size="9.71" fill="#ece8ac" textLength="10.02" lengthAdjust="spacingAndGlyphs" font-weight="bold">J3</text>
<text x="-338.50" y="549.80" font-size="9.57" fill="#c4c8cc" textLength="9.71" lengthAdjust="spacingAndGlyphs" stroke="#c4c8cc" stroke-width="0.2" transform="rotate(-90)">J3</text>
<text x="423.20" y="367.50" font-size="11.06" fill="#c4c8cc" textLength="213.98" lengthAdjust="spacingAndGlyphs" font-family='"Liberation Mono", monospace' stroke="#c4c8cc" stroke-width="0.25">PinHeader_01x02_P2.54mm_Horizontal_SMD</text>
<rect x="254.50" y="344.50" width="54.50" height="57.50" fill="none" stroke="#a3259a" stroke-width="1"/>
<rect x="291.00" y="348.10" width="16.40" height="50.60" fill="none" stroke="#b8b8b0" stroke-width="1"/>
<rect x="274.50" y="355.10" width="16.50" height="3.80" fill="#474a4a"/>
<line x1="274.50" y1="355.30" x2="291.00" y2="355.30" stroke="#b4b6ac" stroke-width="0.7"/>
<line x1="274.50" y1="358.70" x2="291.00" y2="358.70" stroke="#b4b6ac" stroke-width="0.7"/>
<rect x="257.20" y="350.90" width="18.20" height="12.50" fill="#5e1a2a"/>
<rect x="258.10" y="351.80" width="16.40" height="10.70" fill="#e2323f"/>
<text x="266.30" y="356.40" font-size="3.2" fill="#f4c4c4" text-anchor="middle">1</text>
<text x="266.30" y="360.40" font-size="3.2" fill="#f4c4c4" text-anchor="middle">3V3</text>
<rect x="274.50" y="371.35" width="16.50" height="3.80" fill="#474a4a"/>
<line x1="274.50" y1="371.55" x2="291.00" y2="371.55" stroke="#b4b6ac" stroke-width="0.7"/>
<line x1="274.50" y1="374.95" x2="291.00" y2="374.95" stroke="#b4b6ac" stroke-width="0.7"/>
<rect x="257.20" y="367.15" width="18.20" height="12.50" fill="#5e1a2a"/>
<rect x="258.10" y="368.05" width="16.40" height="10.70" fill="#e2323f"/>
<text x="266.30" y="372.65" font-size="3.2" fill="#f4c4c4" text-anchor="middle">2</text>
<text x="266.30" y="376.65" font-size="3.2" fill="#f4c4c4" text-anchor="middle">GND</text>
<rect x="274.50" y="387.60" width="16.50" height="3.80" fill="#474a4a"/>
<line x1="274.50" y1="387.80" x2="291.00" y2="387.80" stroke="#b4b6ac" stroke-width="0.7"/>
<line x1="274.50" y1="391.20" x2="291.00" y2="391.20" stroke="#b4b6ac" stroke-width="0.7"/>
<rect x="257.20" y="383.40" width="18.20" height="12.50" fill="#5e1a2a"/>
<rect x="258.10" y="384.30" width="16.40" height="10.70" fill="#e2323f"/>
<text x="266.30" y="388.90" font-size="3.2" fill="#f4c4c4" text-anchor="middle">3</text>
<text x="266.30" y="392.90" font-size="3.2" fill="#f4c4c4" text-anchor="middle">D1</text>
<line x1="258.00" y1="348.50" x2="266.00" y2="348.50" stroke="#9a9a9a" stroke-width="0.8"/>
<text x="-378.30" y="285.70" font-size="10.72" fill="#c4c8cc" textLength="9.81" lengthAdjust="spacingAndGlyphs" stroke="#c4c8cc" stroke-width="0.2" transform="rotate(-90)">J2</text>
<text x="210.60" y="373.80" font-size="11.01" fill="#ece8ac" textLength="10.82" lengthAdjust="spacingAndGlyphs" font-weight="bold">J2</text>
<text x="176.20" y="414.40" font-size="11.52" fill="#c4c8cc" textLength="214.28" lengthAdjust="spacingAndGlyphs" font-family='"Liberation Mono", monospace' stroke="#c4c8cc" stroke-width="0.25">PinHeader_01x03_P2.54mm_Horizontal_SMD</text>
<rect x="335.80" y="189.20" width="134.50" height="149.70" fill="none" stroke="#a3259a" stroke-width="1"/>
<path d="M345.1 331.3 V205.5 a6 6 0 0 1 6 -6 H455 a6 6 0 0 1 6 6 V331.3 a6 6 0 0 1 -6 6 H351.1 a6 6 0 0 1 -6 -6z" fill="none" stroke="#b4b8b8" stroke-width="1"/>
<path d="M373.5 199.5 V189.8 H432.3 V199.5" fill="none" stroke="#b4b8b8" stroke-width="1"/>
<text x="355.50" y="275.20" font-size="10.61" fill="#c4c8cc" textLength="92.51" lengthAdjust="spacingAndGlyphs" font-family='"Liberation Mono", monospace' stroke="#c4c8cc" stroke-width="0.25">odule_XIAO_ESP32</text>
<circle cx="394.30" cy="212.00" r="5.40" fill="#5e1a2a"/>
<circle cx="394.30" cy="212.00" r="4.40" fill="#e2323f"/>
<circle cx="394.30" cy="228.60" r="5.40" fill="#5e1a2a"/>
<circle cx="394.30" cy="228.60" r="4.40" fill="#e2323f"/>
<circle cx="394.30" cy="245.10" r="5.40" fill="#5e1a2a"/>
<circle cx="394.30" cy="245.10" r="4.40" fill="#e2323f"/>
<circle cx="411.30" cy="212.00" r="5.40" fill="#5e1a2a"/>
<circle cx="411.30" cy="212.00" r="4.40" fill="#e2323f"/>
<circle cx="411.30" cy="228.60" r="5.40" fill="#5e1a2a"/>
<circle cx="411.30" cy="228.60" r="4.40" fill="#e2323f"/>
<circle cx="411.30" cy="245.10" r="5.40" fill="#5e1a2a"/>
<circle cx="411.30" cy="245.10" r="4.40" fill="#e2323f"/>
<rect x="335.40" y="211.95" width="24.80" height="14.30" rx="4.5" fill="#5e1a2a"/>
<path d="M336.3 212.85 H355.7 a3.6 3.6 0 0 1 3.6 3.6 V221.75 a3.6 3.6 0 0 1 -3.6 3.6 H336.3z" fill="#e2323f"/>
<circle cx="353.30" cy="219.10" r="2.90" fill="#050505" stroke="#c8b060" stroke-width="0.5"/>
<rect x="446.80" y="211.95" width="24.70" height="14.30" rx="4.5" fill="#5e1a2a"/>
<path d="M470.6 212.85 H451.3 a3.6 3.6 0 0 0 -3.6 3.6 V221.75 a3.6 3.6 0 0 0 3.6 3.6 H470.6z" fill="#e2323f"/>
<circle cx="452.60" cy="219.10" r="2.90" fill="#050505" stroke="#c8b060" stroke-width="0.5"/>
<text x="344.50" y="218.50" font-size="3.2" fill="#f4c4c4" text-anchor="middle">1</text>
<text x="344.50" y="222.50" font-size="3.2" fill="#f4c4c4" text-anchor="middle">D0</text>
<text x="461.00" y="220.30" font-size="3.8" fill="#f4c4c4" text-anchor="middle">14</text>
<rect x="335.40" y="228.67" width="24.80" height="14.30" rx="4.5" fill="#5e1a2a"/>
<path d="M336.3 229.57 H355.7 a3.6 3.6 0 0 1 3.6 3.6 V238.47 a3.6 3.6 0 0 1 -3.6 3.6 H336.3z" fill="#e2323f"/>
<circle cx="353.30" cy="235.82" r="2.90" fill="#050505" stroke="#c8b060" stroke-width="0.5"/>
<rect x="446.80" y="228.67" width="24.70" height="14.30" rx="4.5" fill="#5e1a2a"/>
<path d="M470.6 229.57 H451.3 a3.6 3.6 0 0 0 -3.6 3.6 V238.47 a3.6 3.6 0 0 0 3.6 3.6 H470.6z" fill="#e2323f"/>
<circle cx="452.60" cy="235.82" r="2.90" fill="#050505" stroke="#c8b060" stroke-width="0.5"/>
<text x="344.50" y="235.22" font-size="3.2" fill="#f4c4c4" text-anchor="middle">2</text>
<text x="344.50" y="239.22" font-size="3.2" fill="#f4c4c4" text-anchor="middle">D1</text>
<text x="461.00" y="237.02" font-size="3.8" fill="#f4c4c4" text-anchor="middle">13</text>
<rect x="335.40" y="245.39" width="24.80" height="14.30" rx="4.5" fill="#5e1a2a"/>
<path d="M336.3 246.29 H355.7 a3.6 3.6 0 0 1 3.6 3.6 V255.19 a3.6 3.6 0 0 1 -3.6 3.6 H336.3z" fill="#e2323f"/>
<circle cx="353.30" cy="252.54" r="2.90" fill="#050505" stroke="#c8b060" stroke-width="0.5"/>
<rect x="446.80" y="245.39" width="24.70" height="14.30" rx="4.5" fill="#5e1a2a"/>
<path d="M470.6 246.29 H451.3 a3.6 3.6 0 0 0 -3.6 3.6 V255.19 a3.6 3.6 0 0 0 3.6 3.6 H470.6z" fill="#e2323f"/>
<circle cx="452.60" cy="252.54" r="2.90" fill="#050505" stroke="#c8b060" stroke-width="0.5"/>
<text x="344.50" y="251.94" font-size="3.2" fill="#f4c4c4" text-anchor="middle">3</text>
<text x="344.50" y="255.94" font-size="3.2" fill="#f4c4c4" text-anchor="middle">D2</text>
<text x="461.00" y="253.74" font-size="3.8" fill="#f4c4c4" text-anchor="middle">12</text>
<rect x="335.40" y="262.11" width="24.80" height="14.30" rx="4.5" fill="#5e1a2a"/>
<path d="M336.3 263.01 H355.7 a3.6 3.6 0 0 1 3.6 3.6 V271.91 a3.6 3.6 0 0 1 -3.6 3.6 H336.3z" fill="#e2323f"/>
<circle cx="353.30" cy="269.26" r="2.90" fill="#050505" stroke="#c8b060" stroke-width="0.5"/>
<rect x="446.80" y="262.11" width="24.70" height="14.30" rx="4.5" fill="#5e1a2a"/>
<path d="M470.6 263.01 H451.3 a3.6 3.6 0 0 0 -3.6 3.6 V271.91 a3.6 3.6 0 0 0 3.6 3.6 H470.6z" fill="#e2323f"/>
<circle cx="452.60" cy="269.26" r="2.90" fill="#050505" stroke="#c8b060" stroke-width="0.5"/>
<text x="344.50" y="268.66" font-size="3.2" fill="#f4c4c4" text-anchor="middle">4</text>
<text x="344.50" y="272.66" font-size="3.2" fill="#f4c4c4" text-anchor="middle">D3</text>
<text x="461.00" y="270.46" font-size="3.8" fill="#f4c4c4" text-anchor="middle">11</text>
<rect x="335.40" y="278.83" width="24.80" height="14.30" rx="4.5" fill="#5e1a2a"/>
<path d="M336.3 279.73 H355.7 a3.6 3.6 0 0 1 3.6 3.6 V288.63 a3.6 3.6 0 0 1 -3.6 3.6 H336.3z" fill="#e2323f"/>
<circle cx="353.30" cy="285.98" r="2.90" fill="#050505" stroke="#c8b060" stroke-width="0.5"/>
<rect x="446.80" y="278.83" width="24.70" height="14.30" rx="4.5" fill="#5e1a2a"/>
<path d="M470.6 279.73 H451.3 a3.6 3.6 0 0 0 -3.6 3.6 V288.63 a3.6 3.6 0 0 0 3.6 3.6 H470.6z" fill="#e2323f"/>
<circle cx="452.60" cy="285.98" r="2.90" fill="#050505" stroke="#c8b060" stroke-width="0.5"/>
<text x="344.50" y="285.38" font-size="3.2" fill="#f4c4c4" text-anchor="middle">5</text>
<text x="344.50" y="289.38" font-size="3.2" fill="#f4c4c4" text-anchor="middle">D4</text>
<text x="461.00" y="287.18" font-size="3.8" fill="#f4c4c4" text-anchor="middle">10</text>
<rect x="335.40" y="295.55" width="24.80" height="14.30" rx="4.5" fill="#5e1a2a"/>
<path d="M336.3 296.45 H355.7 a3.6 3.6 0 0 1 3.6 3.6 V305.35 a3.6 3.6 0 0 1 -3.6 3.6 H336.3z" fill="#e2323f"/>
<circle cx="353.30" cy="302.70" r="2.90" fill="#050505" stroke="#c8b060" stroke-width="0.5"/>
<rect x="446.80" y="295.55" width="24.70" height="14.30" rx="4.5" fill="#5e1a2a"/>
<path d="M470.6 296.45 H451.3 a3.6 3.6 0 0 0 -3.6 3.6 V305.35 a3.6 3.6 0 0 0 3.6 3.6 H470.6z" fill="#e2323f"/>
<circle cx="452.60" cy="302.70" r="2.90" fill="#050505" stroke="#c8b060" stroke-width="0.5"/>
<text x="344.50" y="302.10" font-size="3.2" fill="#f4c4c4" text-anchor="middle">6</text>
<text x="344.50" y="306.10" font-size="3.2" fill="#f4c4c4" text-anchor="middle">D5</text>
<text x="461.00" y="303.90" font-size="3.8" fill="#f4c4c4" text-anchor="middle">9</text>
<rect x="335.40" y="312.27" width="24.80" height="14.30" rx="4.5" fill="#5e1a2a"/>
<path d="M336.3 313.17 H355.7 a3.6 3.6 0 0 1 3.6 3.6 V322.07 a3.6 3.6 0 0 1 -3.6 3.6 H336.3z" fill="#e2323f"/>
<circle cx="353.30" cy="319.42" r="2.90" fill="#050505" stroke="#c8b060" stroke-width="0.5"/>
<rect x="446.80" y="312.27" width="24.70" height="14.30" rx="4.5" fill="#5e1a2a"/>
<path d="M470.6 313.17 H451.3 a3.6 3.6 0 0 0 -3.6 3.6 V322.07 a3.6 3.6 0 0 0 3.6 3.6 H470.6z" fill="#e2323f"/>
<circle cx="452.60" cy="319.42" r="2.90" fill="#050505" stroke="#c8b060" stroke-width="0.5"/>
<text x="344.50" y="318.82" font-size="3.2" fill="#f4c4c4" text-anchor="middle">7</text>
<text x="344.50" y="322.82" font-size="3.2" fill="#f4c4c4" text-anchor="middle">D6</text>
<text x="461.00" y="320.62" font-size="3.8" fill="#f4c4c4" text-anchor="middle">8</text>
<path d="M345.1 331.3 V205.5 a6 6 0 0 1 6 -6 H455 a6 6 0 0 1 6 6 V331.3 a6 6 0 0 1 -6 6 H351.1 a6 6 0 0 1 -6 -6z" fill="none" stroke="#b4b8b8" stroke-width="0.9" opacity="0.75"/>
<rect x="363.90" y="247.90" width="18.20" height="10.30" fill="#5e1a2a"/>
<rect x="364.80" y="248.80" width="16.40" height="8.50" fill="#e2323f"/>
<rect x="363.90" y="261.90" width="18.20" height="11.00" fill="#5e1a2a"/>
<rect x="364.80" y="262.80" width="16.40" height="9.20" fill="#e2323f"/>
<line x1="372.00" y1="245.00" x2="377.00" y2="245.00" stroke="#ece8ac" stroke-width="1.1"/>
<line x1="371.30" y1="278.00" x2="377.70" y2="278.00" stroke="#ece8ac" stroke-width="1.1"/>
<line x1="374.50" y1="274.80" x2="374.50" y2="281.20" stroke="#ece8ac" stroke-width="1.1"/>
<text x="-269.00" y="391.80" font-size="8.99" fill="#ece8ac" textLength="15.31" lengthAdjust="spacingAndGlyphs" font-weight="bold" transform="rotate(-90)">BAT</text>
<rect x="408.40" y="262.50" width="22.10" height="23.20" fill="#5e1a2a"/>
<rect x="409.30" y="263.40" width="20.30" height="21.40" fill="#e2323f"/>
<text x="414.20" y="272.20" font-size="8.7" fill="#f4c0c4" textLength="11.02" lengthAdjust="spacingAndGlyphs">23</text>
<text x="-286.00" y="436.80" font-size="5.22" fill="#ece8ac" textLength="21.99" lengthAdjust="spacingAndGlyphs" font-weight="bold" transform="rotate(-90)">THERMAL</text>
<text x="-218.00" y="403.10" font-size="4.64" fill="#d8d8d0" textLength="11.49" lengthAdjust="spacingAndGlyphs" font-weight="bold" transform="rotate(-90)">MTDI</text>
<text x="-232.50" y="403.10" font-size="4.64" fill="#d8d8d0" textLength="8.00" lengthAdjust="spacingAndGlyphs" font-weight="bold" transform="rotate(-90)">EN</text>
<text x="-251.00" y="403.10" font-size="4.64" fill="#d8d8d0" textLength="11.00" lengthAdjust="spacingAndGlyphs" font-weight="bold" transform="rotate(-90)">MTMS</text>
<text x="-218.00" y="420.10" font-size="4.64" fill="#d8d8d0" textLength="11.50" lengthAdjust="spacingAndGlyphs" font-weight="bold" transform="rotate(-90)">MTDO</text>
<text x="-234.00" y="420.10" font-size="4.64" fill="#d8d8d0" textLength="11.01" lengthAdjust="spacingAndGlyphs" font-weight="bold" transform="rotate(-90)">GND</text>
<text x="-251.00" y="420.10" font-size="4.64" fill="#d8d8d0" textLength="10.99" lengthAdjust="spacingAndGlyphs" font-weight="bold" transform="rotate(-90)">MTCK</text>
<text x="397.00" y="291.20" font-size="9.7" fill="#c4c8cc" textLength="12.00" lengthAdjust="spacingAndGlyphs" font-family='"Liberation Mono", monospace' stroke="#c4c8cc" stroke-width="0.25">M1</text>
<text x="397.00" y="307.80" font-size="9.86" fill="#ece8ac" textLength="11.99" lengthAdjust="spacingAndGlyphs" font-weight="bold">M1</text>
<path d="M323.7 148.7L385.7 157.9M323.7 148.7L347.8 219.1M431 132.4L528.8 194.3M426.5 157.9L411.3 228.6M232.6 210.5L251.9 210.5M245.8 269L264.75 269M251.9 210.5L264.75 269M264.75 269L266.3 357M232.6 210.5L347.8 252.5M264.75 269L411.3 228.6M287.25 269L347.8 269.2M528.8 177.4L529.8 326.1M528.8 177.4L452.6 252.5M452.6 252.5L529.8 326.1M528.8 210.7L353.3 286M528.8 226.8L353.3 302.7M268.5 389.5L341 237M266.3 357L452.6 252.5M266.3 373.2L452.6 235.8" fill="none" stroke="#2a9aa6" stroke-width="1" opacity="0.6"/>
</g>
</svg></body></html>
